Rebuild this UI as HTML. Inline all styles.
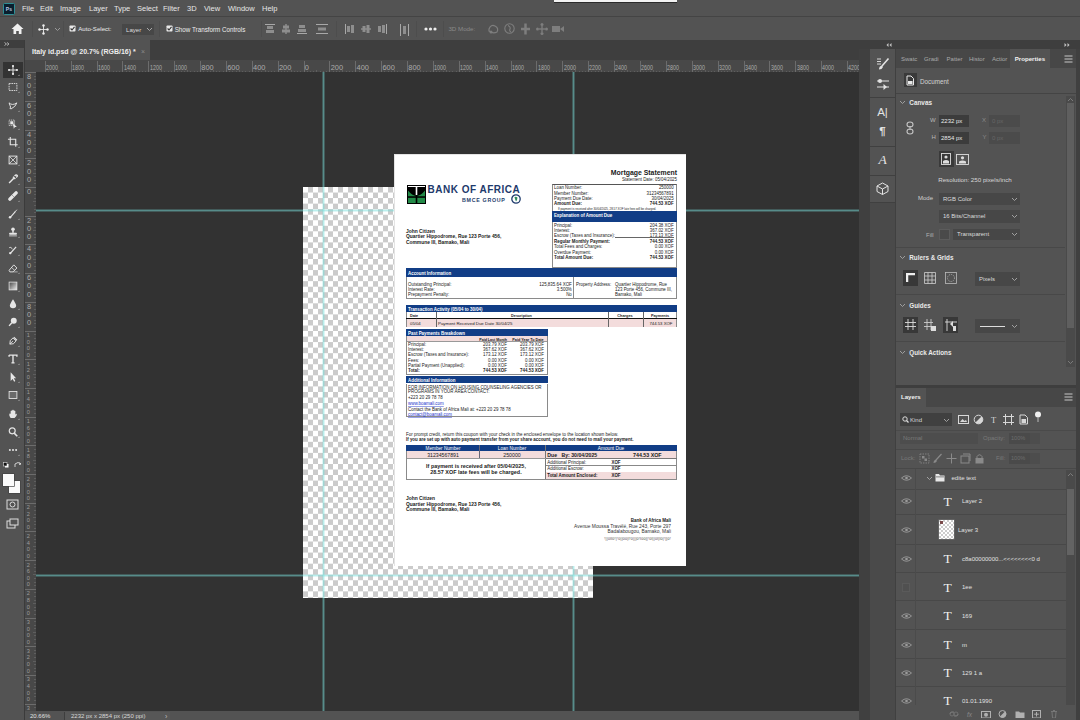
<!DOCTYPE html>
<html><head><meta charset="utf-8">
<style>
*{margin:0;padding:0;box-sizing:border-box}
html,body{width:1080px;height:720px;overflow:hidden;background:#535353;font-family:"Liberation Sans",sans-serif;color:#ddd}
.a{position:absolute}
.t{position:absolute;white-space:pre;line-height:1}
#canvas{left:36px;top:72px;width:823px;height:639px;background:#323232}

</style></head><body>
<div class="a" style="left:0px;top:0px;width:1080px;height:16px;background:#535353;"></div>
<div class="a" style="left:0px;top:16px;width:1080px;height:1px;background:#444444;"></div>
<svg class="a" style="left:2.5px;top:2.5px;" width="12" height="12" viewBox="0 0 12 12"><rect x="0.5" y="0.5" width="11" height="11" rx="1" fill="#0a1f2e" stroke="#2f8f95" stroke-width="1"/><text x="2.8" y="8.2" font-family="Liberation Sans" font-weight="bold" font-size="5" fill="#b9c8e8">Ps</text></svg>
<div class="t" style="top:5px;font-size:7.5px;color:#e6e6e6;left:22px;">File</div>
<div class="t" style="top:5px;font-size:7.5px;color:#e6e6e6;left:40px;">Edit</div>
<div class="t" style="top:5px;font-size:7.5px;color:#e6e6e6;left:60px;">Image</div>
<div class="t" style="top:5px;font-size:7.5px;color:#e6e6e6;left:89px;">Layer</div>
<div class="t" style="top:5px;font-size:7.5px;color:#e6e6e6;left:114px;">Type</div>
<div class="t" style="top:5px;font-size:7.5px;color:#e6e6e6;left:137px;">Select</div>
<div class="t" style="top:5px;font-size:7.5px;color:#e6e6e6;left:163px;">Filter</div>
<div class="t" style="top:5px;font-size:7.5px;color:#e6e6e6;left:187px;">3D</div>
<div class="t" style="top:5px;font-size:7.5px;color:#e6e6e6;left:204px;">View</div>
<div class="t" style="top:5px;font-size:7.5px;color:#e6e6e6;left:228px;">Window</div>
<div class="t" style="top:5px;font-size:7.5px;color:#e6e6e6;left:262px;">Help</div>
<div class="a" style="left:554px;top:0px;width:123px;height:1.6px;background:#f2f2f2;box-shadow:0 1px 0 #2a2a2a;"></div>
<div class="a" style="left:0px;top:17.5px;width:1080px;height:22.5px;background:#535353;"></div>
<svg class="a" style="left:11px;top:23px;" width="13" height="12" viewBox="0 0 13 12"><path d="M6.5 0.5 L12.5 6 L10.5 6 L10.5 11 L7.8 11 L7.8 8 L5.2 8 L5.2 11 L2.5 11 L2.5 6 L0.5 6Z" fill="#f0f0f0"/></svg>
<div class="a" style="left:32px;top:21px;width:1px;height:16px;background:#4d4d4d;"></div>
<svg class="a" style="left:38px;top:24px;" width="11" height="11" viewBox="0 0 11 11"><path d="M5.5 1 L5.5 10 M1 5.5 L10 5.5" stroke="#e8e8e8" stroke-width="0.9"/><circle cx="5.5" cy="1.5" r="1.2" fill="#eee"/><circle cx="5.5" cy="9.5" r="1.2" fill="#eee"/><circle cx="1.5" cy="5.5" r="1.2" fill="#eee"/><circle cx="9.5" cy="5.5" r="1.2" fill="#eee"/></svg>
<svg class="a" style="left:54px;top:27px;" width="7" height="5" viewBox="0 0 7 5"><path d="M1 1 L3.5 3.5 L6 1" stroke="#999" stroke-width="1" fill="none"/></svg>
<div class="a" style="left:63px;top:21px;width:1px;height:16px;background:#4d4d4d;"></div>
<svg class="a" style="left:68.5px;top:25px;" width="7" height="7" viewBox="0 0 7 7"><rect x="0.5" y="0.5" width="6" height="6" rx="0.8" fill="#e8e8e8"/><path d="M1.6 3.5 L3 5 L5.5 1.8" stroke="#333" stroke-width="1.1" fill="none"/></svg>
<div class="t" style="top:26px;font-size:6.1px;color:#ececec;left:78.3px;">Auto-Select:</div>
<div class="a" style="left:122px;top:23.6px;width:32px;height:11.8px;background:#474747;"></div>
<div class="t" style="top:27px;font-size:6.1px;color:#dedede;left:126px;">Layer</div>
<svg class="a" style="left:146px;top:27px;" width="7" height="5" viewBox="0 0 7 5"><path d="M1 1 L3.5 3.5 L6 1" stroke="#aaa" stroke-width="1" fill="none"/></svg>
<div class="a" style="left:158.5px;top:21px;width:1px;height:16px;background:#4d4d4d;"></div>
<svg class="a" style="left:165.5px;top:25px;" width="7" height="7" viewBox="0 0 7 7"><rect x="0.5" y="0.5" width="6" height="6" rx="0.8" fill="#e8e8e8"/><path d="M1.6 3.5 L3 5 L5.5 1.8" stroke="#333" stroke-width="1.1" fill="none"/></svg>
<div class="t" style="top:27px;font-size:6.28px;color:#ececec;left:174.7px;">Show Transform Controls</div>
<div class="a" style="left:260.5px;top:21px;width:1px;height:16px;background:#4d4d4d;"></div>
<svg class="a" style="left:265px;top:24px;" width="12" height="12" viewBox="0 0 12 12"><rect x="0" y="0" width="10" height="1" fill="#a8a8a8"/><rect x="2" y="2" width="6" height="3" fill="#8e8e8e"/><rect x="1" y="6" width="8" height="3" fill="#8e8e8e"/></svg>
<svg class="a" style="left:281px;top:24px;" width="12" height="12" viewBox="0 0 12 12"><rect x="4.5" y="0" width="1" height="10" fill="#a8a8a8"/><rect x="2" y="1.5" width="6" height="3" fill="#8e8e8e"/><rect x="1" y="5.5" width="8" height="3" fill="#8e8e8e"/></svg>
<svg class="a" style="left:296.5px;top:24px;" width="12" height="12" viewBox="0 0 12 12"><rect x="2" y="1" width="6" height="3" fill="#8e8e8e"/><rect x="1" y="5" width="8" height="3" fill="#8e8e8e"/><rect x="0" y="9" width="10" height="1" fill="#a8a8a8"/></svg>
<svg class="a" style="left:316px;top:24px;" width="12" height="12" viewBox="0 0 12 12"><rect x="0" y="0" width="12" height="1" fill="#a8a8a8"/><rect x="2" y="3.5" width="8" height="3" fill="#8e8e8e"/><rect x="0" y="9" width="12" height="1" fill="#a8a8a8"/></svg>
<svg class="a" style="left:345px;top:24px;" width="12" height="12" viewBox="0 0 12 12"><rect x="0" y="0" width="1" height="10" fill="#a8a8a8"/><rect x="2" y="2" width="3" height="6" fill="#8e8e8e"/><rect x="6" y="1" width="3" height="8" fill="#8e8e8e"/></svg>
<svg class="a" style="left:361px;top:24px;" width="12" height="12" viewBox="0 0 12 12"><rect x="0" y="4.5" width="10" height="1" fill="#a8a8a8"/><rect x="1.5" y="2" width="3" height="6" fill="#8e8e8e"/><rect x="5.5" y="1" width="3" height="8" fill="#8e8e8e"/></svg>
<svg class="a" style="left:377px;top:24px;" width="12" height="12" viewBox="0 0 12 12"><rect x="1" y="2" width="3" height="6" fill="#8e8e8e"/><rect x="5" y="1" width="3" height="8" fill="#8e8e8e"/><rect x="9" y="0" width="1" height="10" fill="#a8a8a8"/></svg>
<svg class="a" style="left:400px;top:24px;" width="12" height="12" viewBox="0 0 12 12"><rect x="0" y="0" width="1" height="12" fill="#a8a8a8"/><rect x="3" y="2" width="3" height="8" fill="#8e8e8e"/><rect x="8" y="0" width="1" height="12" fill="#a8a8a8"/></svg>
<div class="a" style="left:336px;top:21px;width:1px;height:16px;background:#4d4d4d;"></div>
<div class="a" style="left:416px;top:21px;width:1px;height:16px;background:#4d4d4d;"></div>
<svg class="a" style="left:424px;top:27px;" width="13" height="4" viewBox="0 0 13 4"><circle cx="2" cy="2" r="1.6" fill="#eee"/><circle cx="6.5" cy="2" r="1.6" fill="#eee"/><circle cx="11" cy="2" r="1.6" fill="#eee"/></svg>
<div class="a" style="left:442.5px;top:21px;width:1px;height:16px;background:#4d4d4d;"></div>
<div class="t" style="top:26px;font-size:6.2px;color:#8a8a8a;left:448.4px;">3D Mode:</div>
<svg class="a" style="left:487px;top:23px;" width="13" height="12" viewBox="0 0 13 12"><path d="M2 6 Q4 1 8 3 Q12 5 10 9 Q6 11 2 8Z" fill="none" stroke="#7e7e7e" stroke-width="1.2"/><circle cx="4" cy="9" r="1.5" fill="#7e7e7e"/></svg>
<svg class="a" style="left:504px;top:23px;" width="11" height="11" viewBox="0 0 11 11"><circle cx="5.5" cy="5.5" r="4.7" fill="none" stroke="#7e7e7e" stroke-width="1.1"/><path d="M4 2.5 Q7 4 6 6 Q5 8 7 9" fill="none" stroke="#7e7e7e" stroke-width="1.1"/></svg>
<svg class="a" style="left:520px;top:23px;" width="11" height="12" viewBox="0 0 11 12"><path d="M5.5 0.5 L5.5 11.5 M1 6 L10 6" stroke="#7e7e7e" stroke-width="2.5"/></svg>
<svg class="a" style="left:536px;top:23px;" width="12" height="12" viewBox="0 0 12 12"><circle cx="6" cy="1.5" r="1.5" fill="#7e7e7e"/><circle cx="6" cy="10.5" r="1.5" fill="#7e7e7e"/><circle cx="1.5" cy="6" r="1.5" fill="#7e7e7e"/><circle cx="10.5" cy="6" r="1.5" fill="#7e7e7e"/><rect x="5.3" y="3" width="1.4" height="6" fill="#7e7e7e"/><rect x="3" y="5.3" width="6" height="1.4" fill="#7e7e7e"/></svg>
<svg class="a" style="left:552px;top:25px;" width="13" height="8" viewBox="0 0 13 8"><rect x="0" y="1" width="8" height="6" fill="#7e7e7e"/><path d="M8 4 L12 1 L12 7Z" fill="#7e7e7e"/></svg>
<div class="a" style="left:0px;top:40px;width:24px;height:8px;background:#3e3e3e;"></div>
<svg class="a" style="left:4px;top:42px;" width="6" height="4" viewBox="0 0 6 4"><path d="M0.5 0.5 L2.5 2 L0.5 3.5 M3 0.5 L5 2 L3 3.5" stroke="#bbb" stroke-width="0.9" fill="none"/></svg>
<div class="a" style="left:0px;top:48px;width:24px;height:663px;background:#535353;"></div>
<div class="a" style="left:24px;top:40px;width:1px;height:680px;background:#3b3b3b;"></div>
<div class="a" style="left:2.6px;top:62px;width:20px;height:16px;background:#333333;"></div>
<svg class="a" style="left:5.5px;top:63.0px;" width="14" height="14" viewBox="0 0 14 14"><g transform="translate(7 7) scale(0.78) translate(-7 -7)"><path d="M7 1 L7 13 M1 7 L13 7" stroke="#e6e6e6" stroke-width="1.2"/><circle cx="7" cy="2" r="1.4" fill="#e6e6e6"/><circle cx="7" cy="12" r="1.4" fill="#e6e6e6"/><circle cx="2" cy="7" r="1.4" fill="#e6e6e6"/><circle cx="12" cy="7" r="1.4" fill="#e6e6e6"/></g><path d="M12 13 L13.5 13 L13.5 11.5Z" fill="#aaa"/></svg>
<svg class="a" style="left:5.5px;top:80.0px;" width="14" height="14" viewBox="0 0 14 14"><g transform="translate(7 7) scale(0.78) translate(-7 -7)"><rect x="2" y="2.5" width="10" height="9" fill="none" stroke="#e6e6e6" stroke-width="1.1" stroke-dasharray="2 1"/></g><path d="M12 13 L13.5 13 L13.5 11.5Z" fill="#aaa"/></svg>
<svg class="a" style="left:5.5px;top:98.5px;" width="14" height="14" viewBox="0 0 14 14"><g transform="translate(7 7) scale(0.78) translate(-7 -7)"><path d="M2 3 Q6 7 12 3 Q9 9 7 9 Q4 12 3 10 Q5 9 3 6Z" fill="none" stroke="#e6e6e6" stroke-width="1.2"/></g><path d="M12 13 L13.5 13 L13.5 11.5Z" fill="#aaa"/></svg>
<svg class="a" style="left:5.5px;top:117.0px;" width="14" height="14" viewBox="0 0 14 14"><g transform="translate(7 7) scale(0.78) translate(-7 -7)"><rect x="2" y="2" width="7" height="7" fill="none" stroke="#e6e6e6" stroke-width="1" stroke-dasharray="1.5 1"/><rect x="3.5" y="3.5" width="4" height="4" fill="#e6e6e6"/><path d="M7 6 L12 11 L9.5 11 L8 13Z" fill="#e6e6e6"/></g><path d="M12 13 L13.5 13 L13.5 11.5Z" fill="#aaa"/></svg>
<svg class="a" style="left:5.5px;top:134.5px;" width="14" height="14" viewBox="0 0 14 14"><g transform="translate(7 7) scale(0.78) translate(-7 -7)"><path d="M3.5 0.5 L3.5 10.5 L13 10.5 M0.5 3.5 L10.5 3.5 L10.5 13" stroke="#e6e6e6" stroke-width="1.4" fill="none"/></g><path d="M12 13 L13.5 13 L13.5 11.5Z" fill="#aaa"/></svg>
<svg class="a" style="left:5.5px;top:152.5px;" width="14" height="14" viewBox="0 0 14 14"><g transform="translate(7 7) scale(0.78) translate(-7 -7)"><rect x="2" y="2" width="10" height="10" fill="none" stroke="#e6e6e6" stroke-width="1.2"/><path d="M2 2 L12 12 M12 2 L2 12" stroke="#e6e6e6" stroke-width="1"/></g><path d="M12 13 L13.5 13 L13.5 11.5Z" fill="#aaa"/></svg>
<svg class="a" style="left:5.5px;top:171.5px;" width="14" height="14" viewBox="0 0 14 14"><g transform="translate(7 7) scale(0.78) translate(-7 -7)"><path d="M2 12 L8 6 M7 4 L10 7 M9 3 Q11 1 12.5 2.5 Q13 4 11 5" stroke="#e6e6e6" stroke-width="1.8" fill="none"/></g><path d="M12 13 L13.5 13 L13.5 11.5Z" fill="#aaa"/></svg>
<svg class="a" style="left:5.5px;top:189.0px;" width="14" height="14" viewBox="0 0 14 14"><g transform="translate(7 7) scale(0.78) translate(-7 -7)"><path d="M3 11 L11 3" stroke="#e6e6e6" stroke-width="4.5" stroke-linecap="round"/><path d="M6 6 L8 8" stroke="#888" stroke-width="1.2"/></g><path d="M12 13 L13.5 13 L13.5 11.5Z" fill="#aaa"/></svg>
<svg class="a" style="left:5.5px;top:206.5px;" width="14" height="14" viewBox="0 0 14 14"><g transform="translate(7 7) scale(0.78) translate(-7 -7)"><path d="M3 12 L10 4" stroke="#e6e6e6" stroke-width="1.5"/><path d="M9 5 L12 1.5" stroke="#e6e6e6" stroke-width="1.1"/><circle cx="3.2" cy="11.2" r="1.6" fill="#e6e6e6"/></g><path d="M12 13 L13.5 13 L13.5 11.5Z" fill="#aaa"/></svg>
<svg class="a" style="left:5.5px;top:224.5px;" width="14" height="14" viewBox="0 0 14 14"><g transform="translate(7 7) scale(0.78) translate(-7 -7)"><circle cx="7" cy="3.5" r="2.3" fill="#e6e6e6"/><rect x="6" y="5" width="2" height="3" fill="#e6e6e6"/><rect x="2" y="8" width="10" height="2.5" rx="1" fill="#e6e6e6"/><rect x="2" y="11.5" width="10" height="1" fill="#e6e6e6"/></g><path d="M12 13 L13.5 13 L13.5 11.5Z" fill="#aaa"/></svg>
<svg class="a" style="left:5.5px;top:243.0px;" width="14" height="14" viewBox="0 0 14 14"><g transform="translate(7 7) scale(0.78) translate(-7 -7)"><path d="M3 12 L11 3" stroke="#e6e6e6" stroke-width="1.6"/><path d="M2 4 Q5 2 6 6" stroke="#e6e6e6" stroke-width="1" fill="none"/><circle cx="3.5" cy="11" r="1.5" fill="#e6e6e6"/></g><path d="M12 13 L13.5 13 L13.5 11.5Z" fill="#aaa"/></svg>
<svg class="a" style="left:5.5px;top:261.0px;" width="14" height="14" viewBox="0 0 14 14"><g transform="translate(7 7) scale(0.78) translate(-7 -7)"><path d="M2 10 L8 3 L12 7 L7 12 L3 12Z" fill="none" stroke="#e6e6e6" stroke-width="1.2"/><path d="M5 6 L9 10" stroke="#e6e6e6" stroke-width="1"/><path d="M7 12 L13 12" stroke="#e6e6e6" stroke-width="0.8"/></g><path d="M12 13 L13.5 13 L13.5 11.5Z" fill="#aaa"/></svg>
<svg class="a" style="left:5.5px;top:279.0px;" width="14" height="14" viewBox="0 0 14 14"><g transform="translate(7 7) scale(0.78) translate(-7 -7)"><defs><linearGradient id="gr" x1="0" x2="1" y1="0" y2="1"><stop offset="0" stop-color="#444"/><stop offset="1" stop-color="#eee"/></linearGradient></defs><rect x="2" y="2" width="10" height="10" fill="url(#gr)" stroke="#e6e6e6" stroke-width="1"/></g><path d="M12 13 L13.5 13 L13.5 11.5Z" fill="#aaa"/></svg>
<svg class="a" style="left:5.5px;top:297.0px;" width="14" height="14" viewBox="0 0 14 14"><g transform="translate(7 7) scale(0.78) translate(-7 -7)"><path d="M7 1 Q11 7 11 9 Q11 12.5 7 12.5 Q3 12.5 3 9 Q3 7 7 1Z" fill="#e6e6e6"/></g><path d="M12 13 L13.5 13 L13.5 11.5Z" fill="#aaa"/></svg>
<svg class="a" style="left:5.5px;top:315.0px;" width="14" height="14" viewBox="0 0 14 14"><g transform="translate(7 7) scale(0.78) translate(-7 -7)"><circle cx="8" cy="5.5" r="3.8" fill="#e6e6e6"/><path d="M5.5 8 L2 12" stroke="#e6e6e6" stroke-width="1.8"/></g><path d="M12 13 L13.5 13 L13.5 11.5Z" fill="#aaa"/></svg>
<svg class="a" style="left:5.5px;top:334.0px;" width="14" height="14" viewBox="0 0 14 14"><g transform="translate(7 7) scale(0.78) translate(-7 -7)"><path d="M3 11 Q2 6 7 3 L11 7 Q8 12 3 11Z" fill="none" stroke="#e6e6e6" stroke-width="1.2"/><path d="M3 11 L7 7" stroke="#e6e6e6" stroke-width="1"/><path d="M8 2 L12 6" stroke="#e6e6e6" stroke-width="1.5"/></g><path d="M12 13 L13.5 13 L13.5 11.5Z" fill="#aaa"/></svg>
<svg class="a" style="left:5.5px;top:352.0px;" width="14" height="14" viewBox="0 0 14 14"><g transform="translate(7 7) scale(0.78) translate(-7 -7)"><path d="M2 2 L12 2 L12 4 M2 2 L2 4 M7 2 L7 12 M5 12 L9 12" stroke="#e6e6e6" stroke-width="1.8" fill="none"/></g><path d="M12 13 L13.5 13 L13.5 11.5Z" fill="#aaa"/></svg>
<svg class="a" style="left:5.5px;top:370.0px;" width="14" height="14" viewBox="0 0 14 14"><g transform="translate(7 7) scale(0.78) translate(-7 -7)"><path d="M4 1 L4 12 L6.5 9.5 L8.5 13 L10 12 L8 8.5 L11 8.5Z" fill="#e6e6e6"/></g><path d="M12 13 L13.5 13 L13.5 11.5Z" fill="#aaa"/></svg>
<svg class="a" style="left:5.5px;top:388.0px;" width="14" height="14" viewBox="0 0 14 14"><g transform="translate(7 7) scale(0.78) translate(-7 -7)"><rect x="2" y="2.5" width="10" height="9" fill="#6a6a6a" stroke="#e6e6e6" stroke-width="1.1"/></g><path d="M12 13 L13.5 13 L13.5 11.5Z" fill="#aaa"/></svg>
<svg class="a" style="left:5.5px;top:406.5px;" width="14" height="14" viewBox="0 0 14 14"><g transform="translate(7 7) scale(0.78) translate(-7 -7)"><path d="M4 12 Q1 8 3 6 L4 7 L4 3 Q5 2 6 3 L6 2 Q7 1 8 2 L8 3 Q9 2 10 3 L10 8 Q11 6 12 7 Q12 10 9 12Z" fill="#e6e6e6"/></g><path d="M12 13 L13.5 13 L13.5 11.5Z" fill="#aaa"/></svg>
<svg class="a" style="left:5.5px;top:425.0px;" width="14" height="14" viewBox="0 0 14 14"><g transform="translate(7 7) scale(0.78) translate(-7 -7)"><circle cx="6" cy="5.5" r="3.8" fill="none" stroke="#e6e6e6" stroke-width="1.5"/><path d="M8.5 8.5 L12.5 12.5" stroke="#e6e6e6" stroke-width="2"/></g><path d="M12 13 L13.5 13 L13.5 11.5Z" fill="#aaa"/></svg>
<svg class="a" style="left:5.5px;top:442.5px;" width="14" height="14" viewBox="0 0 14 14"><g transform="translate(7 7) scale(0.78) translate(-7 -7)"><circle cx="3" cy="7" r="1.3" fill="#e6e6e6"/><circle cx="7" cy="7" r="1.3" fill="#e6e6e6"/><circle cx="11" cy="7" r="1.3" fill="#e6e6e6"/></g><path d="M12 13 L13.5 13 L13.5 11.5Z" fill="#aaa"/></svg>
<svg class="a" style="left:3px;top:462px;" width="6" height="6" viewBox="0 0 6 6"><rect x="2" y="2" width="3.5" height="3.5" fill="#fff"/><rect x="0.5" y="0.5" width="3.5" height="3.5" fill="#111" stroke="#ddd" stroke-width="0.6"/></svg>
<svg class="a" style="left:14px;top:461px;" width="8" height="7" viewBox="0 0 8 7"><path d="M1 3 Q4 0 7 3 M5.5 1.5 L7 3 L5 3.5" stroke="#ddd" stroke-width="0.9" fill="none"/><path d="M1 3 L1 6" stroke="#ddd" stroke-width="0.9"/></svg>
<div class="a" style="left:9px;top:481px;width:11px;height:12px;background:#fafafa;box-shadow:0 0 0 0.7px #444;"></div>
<div class="a" style="left:3px;top:474px;width:11px;height:12px;background:#fafafa;box-shadow:0 0 0 0.7px #444;"></div>
<svg class="a" style="left:6px;top:499px;" width="13" height="11" viewBox="0 0 13 11"><rect x="1" y="1" width="11" height="9" fill="none" stroke="#ddd" stroke-width="1"/><circle cx="6.5" cy="5.5" r="2.5" fill="none" stroke="#ddd" stroke-width="1"/></svg>
<svg class="a" style="left:6px;top:518px;" width="13" height="11" viewBox="0 0 13 11"><rect x="1" y="3" width="8" height="7" fill="none" stroke="#ddd" stroke-width="1"/><rect x="4" y="1" width="8" height="6" fill="#535353" stroke="#ddd" stroke-width="1"/></svg>
<div class="a" style="left:25px;top:40px;width:834px;height:20px;background:#3e3e3e;"></div>
<div class="a" style="left:25px;top:40px;width:125px;height:20px;background:#535353;"></div>
<div class="t" style="top:48px;font-size:7.0px;font-weight:bold;color:#eeeeee;left:32px;">Italy id.psd @ 20.7% (RGB/16) *</div>
<div class="t" style="top:48px;font-size:7px;color:#8a8a8a;left:141px;">×</div>
<div class="a" style="left:25px;top:60px;width:834px;height:12.5px;background:#484848;"></div>
<div class="a" style="left:25px;top:72.5px;width:11px;height:638.5px;background:#484848;"></div>
<div class="a" style="left:25px;top:72px;width:834px;height:0.6px;background:#3a3a3a;"></div>
<div class="a" style="left:35.5px;top:72px;width:0.6px;height:639px;background:#3a3a3a;"></div>
<div class="a" style="left:44.7px;top:61px;width:0.8px;height:11.5px;background:#6c6c6c;"></div>
<div class="a" style="left:47.9px;top:70.9px;width:0.6px;height:1.6px;background:#5e5e5e;"></div>
<div class="a" style="left:51.2px;top:70.9px;width:0.6px;height:1.6px;background:#5e5e5e;"></div>
<div class="a" style="left:54.4px;top:70.9px;width:0.6px;height:1.6px;background:#5e5e5e;"></div>
<div class="a" style="left:57.6px;top:69.5px;width:0.6px;height:3px;background:#5e5e5e;"></div>
<div class="a" style="left:60.9px;top:70.9px;width:0.6px;height:1.6px;background:#5e5e5e;"></div>
<div class="a" style="left:64.1px;top:70.9px;width:0.6px;height:1.6px;background:#5e5e5e;"></div>
<div class="a" style="left:67.3px;top:70.9px;width:0.6px;height:1.6px;background:#5e5e5e;"></div>
<div class="t" style="top:64px;font-size:7.4px;color:#ababab;left:45.999999999999986px;transform:scaleX(0.72);transform-origin:0 0;">2000</div>
<div class="a" style="left:70.6px;top:61px;width:0.8px;height:11.5px;background:#6c6c6c;"></div>
<div class="a" style="left:73.8px;top:70.9px;width:0.6px;height:1.6px;background:#5e5e5e;"></div>
<div class="a" style="left:77.1px;top:70.9px;width:0.6px;height:1.6px;background:#5e5e5e;"></div>
<div class="a" style="left:80.3px;top:70.9px;width:0.6px;height:1.6px;background:#5e5e5e;"></div>
<div class="a" style="left:83.5px;top:69.5px;width:0.6px;height:3px;background:#5e5e5e;"></div>
<div class="a" style="left:86.8px;top:70.9px;width:0.6px;height:1.6px;background:#5e5e5e;"></div>
<div class="a" style="left:90.0px;top:70.9px;width:0.6px;height:1.6px;background:#5e5e5e;"></div>
<div class="a" style="left:93.2px;top:70.9px;width:0.6px;height:1.6px;background:#5e5e5e;"></div>
<div class="t" style="top:64px;font-size:7.4px;color:#ababab;left:71.88000000000001px;transform:scaleX(0.72);transform-origin:0 0;">1800</div>
<div class="a" style="left:96.5px;top:61px;width:0.8px;height:11.5px;background:#6c6c6c;"></div>
<div class="a" style="left:99.7px;top:70.9px;width:0.6px;height:1.6px;background:#5e5e5e;"></div>
<div class="a" style="left:102.9px;top:70.9px;width:0.6px;height:1.6px;background:#5e5e5e;"></div>
<div class="a" style="left:106.2px;top:70.9px;width:0.6px;height:1.6px;background:#5e5e5e;"></div>
<div class="a" style="left:109.4px;top:69.5px;width:0.6px;height:3px;background:#5e5e5e;"></div>
<div class="a" style="left:112.6px;top:70.9px;width:0.6px;height:1.6px;background:#5e5e5e;"></div>
<div class="a" style="left:115.9px;top:70.9px;width:0.6px;height:1.6px;background:#5e5e5e;"></div>
<div class="a" style="left:119.1px;top:70.9px;width:0.6px;height:1.6px;background:#5e5e5e;"></div>
<div class="t" style="top:64px;font-size:7.4px;color:#ababab;left:97.76px;transform:scaleX(0.72);transform-origin:0 0;">1600</div>
<div class="a" style="left:122.3px;top:61px;width:0.8px;height:11.5px;background:#6c6c6c;"></div>
<div class="a" style="left:125.6px;top:70.9px;width:0.6px;height:1.6px;background:#5e5e5e;"></div>
<div class="a" style="left:128.8px;top:70.9px;width:0.6px;height:1.6px;background:#5e5e5e;"></div>
<div class="a" style="left:132.0px;top:70.9px;width:0.6px;height:1.6px;background:#5e5e5e;"></div>
<div class="a" style="left:135.3px;top:69.5px;width:0.6px;height:3px;background:#5e5e5e;"></div>
<div class="a" style="left:138.5px;top:70.9px;width:0.6px;height:1.6px;background:#5e5e5e;"></div>
<div class="a" style="left:141.8px;top:70.9px;width:0.6px;height:1.6px;background:#5e5e5e;"></div>
<div class="a" style="left:145.0px;top:70.9px;width:0.6px;height:1.6px;background:#5e5e5e;"></div>
<div class="t" style="top:64px;font-size:7.4px;color:#ababab;left:123.64px;transform:scaleX(0.72);transform-origin:0 0;">1400</div>
<div class="a" style="left:148.2px;top:61px;width:0.8px;height:11.5px;background:#6c6c6c;"></div>
<div class="a" style="left:151.5px;top:70.9px;width:0.6px;height:1.6px;background:#5e5e5e;"></div>
<div class="a" style="left:154.7px;top:70.9px;width:0.6px;height:1.6px;background:#5e5e5e;"></div>
<div class="a" style="left:157.9px;top:70.9px;width:0.6px;height:1.6px;background:#5e5e5e;"></div>
<div class="a" style="left:161.2px;top:69.5px;width:0.6px;height:3px;background:#5e5e5e;"></div>
<div class="a" style="left:164.4px;top:70.9px;width:0.6px;height:1.6px;background:#5e5e5e;"></div>
<div class="a" style="left:167.6px;top:70.9px;width:0.6px;height:1.6px;background:#5e5e5e;"></div>
<div class="a" style="left:170.9px;top:70.9px;width:0.6px;height:1.6px;background:#5e5e5e;"></div>
<div class="t" style="top:64px;font-size:7.4px;color:#ababab;left:149.52px;transform:scaleX(0.72);transform-origin:0 0;">1200</div>
<div class="a" style="left:174.1px;top:61px;width:0.8px;height:11.5px;background:#6c6c6c;"></div>
<div class="a" style="left:177.3px;top:70.9px;width:0.6px;height:1.6px;background:#5e5e5e;"></div>
<div class="a" style="left:180.6px;top:70.9px;width:0.6px;height:1.6px;background:#5e5e5e;"></div>
<div class="a" style="left:183.8px;top:70.9px;width:0.6px;height:1.6px;background:#5e5e5e;"></div>
<div class="a" style="left:187.0px;top:69.5px;width:0.6px;height:3px;background:#5e5e5e;"></div>
<div class="a" style="left:190.3px;top:70.9px;width:0.6px;height:1.6px;background:#5e5e5e;"></div>
<div class="a" style="left:193.5px;top:70.9px;width:0.6px;height:1.6px;background:#5e5e5e;"></div>
<div class="a" style="left:196.7px;top:70.9px;width:0.6px;height:1.6px;background:#5e5e5e;"></div>
<div class="t" style="top:64px;font-size:7.4px;color:#ababab;left:175.4px;transform:scaleX(0.72);transform-origin:0 0;">1000</div>
<div class="a" style="left:200.0px;top:61px;width:0.8px;height:11.5px;background:#6c6c6c;"></div>
<div class="a" style="left:203.2px;top:70.9px;width:0.6px;height:1.6px;background:#5e5e5e;"></div>
<div class="a" style="left:206.5px;top:70.9px;width:0.6px;height:1.6px;background:#5e5e5e;"></div>
<div class="a" style="left:209.7px;top:70.9px;width:0.6px;height:1.6px;background:#5e5e5e;"></div>
<div class="a" style="left:212.9px;top:69.5px;width:0.6px;height:3px;background:#5e5e5e;"></div>
<div class="a" style="left:216.2px;top:70.9px;width:0.6px;height:1.6px;background:#5e5e5e;"></div>
<div class="a" style="left:219.4px;top:70.9px;width:0.6px;height:1.6px;background:#5e5e5e;"></div>
<div class="a" style="left:222.6px;top:70.9px;width:0.6px;height:1.6px;background:#5e5e5e;"></div>
<div class="t" style="top:64px;font-size:7.4px;color:#ababab;left:201.28000000000003px;">800</div>
<div class="a" style="left:225.9px;top:61px;width:0.8px;height:11.5px;background:#6c6c6c;"></div>
<div class="a" style="left:229.1px;top:70.9px;width:0.6px;height:1.6px;background:#5e5e5e;"></div>
<div class="a" style="left:232.3px;top:70.9px;width:0.6px;height:1.6px;background:#5e5e5e;"></div>
<div class="a" style="left:235.6px;top:70.9px;width:0.6px;height:1.6px;background:#5e5e5e;"></div>
<div class="a" style="left:238.8px;top:69.5px;width:0.6px;height:3px;background:#5e5e5e;"></div>
<div class="a" style="left:242.0px;top:70.9px;width:0.6px;height:1.6px;background:#5e5e5e;"></div>
<div class="a" style="left:245.3px;top:70.9px;width:0.6px;height:1.6px;background:#5e5e5e;"></div>
<div class="a" style="left:248.5px;top:70.9px;width:0.6px;height:1.6px;background:#5e5e5e;"></div>
<div class="t" style="top:64px;font-size:7.4px;color:#ababab;left:227.16000000000003px;">600</div>
<div class="a" style="left:251.7px;top:61px;width:0.8px;height:11.5px;background:#6c6c6c;"></div>
<div class="a" style="left:255.0px;top:70.9px;width:0.6px;height:1.6px;background:#5e5e5e;"></div>
<div class="a" style="left:258.2px;top:70.9px;width:0.6px;height:1.6px;background:#5e5e5e;"></div>
<div class="a" style="left:261.4px;top:70.9px;width:0.6px;height:1.6px;background:#5e5e5e;"></div>
<div class="a" style="left:264.7px;top:69.5px;width:0.6px;height:3px;background:#5e5e5e;"></div>
<div class="a" style="left:267.9px;top:70.9px;width:0.6px;height:1.6px;background:#5e5e5e;"></div>
<div class="a" style="left:271.2px;top:70.9px;width:0.6px;height:1.6px;background:#5e5e5e;"></div>
<div class="a" style="left:274.4px;top:70.9px;width:0.6px;height:1.6px;background:#5e5e5e;"></div>
<div class="t" style="top:64px;font-size:7.4px;color:#ababab;left:253.04000000000002px;">400</div>
<div class="a" style="left:277.6px;top:61px;width:0.8px;height:11.5px;background:#6c6c6c;"></div>
<div class="a" style="left:280.9px;top:70.9px;width:0.6px;height:1.6px;background:#5e5e5e;"></div>
<div class="a" style="left:284.1px;top:70.9px;width:0.6px;height:1.6px;background:#5e5e5e;"></div>
<div class="a" style="left:287.3px;top:70.9px;width:0.6px;height:1.6px;background:#5e5e5e;"></div>
<div class="a" style="left:290.6px;top:69.5px;width:0.6px;height:3px;background:#5e5e5e;"></div>
<div class="a" style="left:293.8px;top:70.9px;width:0.6px;height:1.6px;background:#5e5e5e;"></div>
<div class="a" style="left:297.0px;top:70.9px;width:0.6px;height:1.6px;background:#5e5e5e;"></div>
<div class="a" style="left:300.3px;top:70.9px;width:0.6px;height:1.6px;background:#5e5e5e;"></div>
<div class="t" style="top:64px;font-size:7.4px;color:#ababab;left:278.92px;">200</div>
<div class="a" style="left:303.5px;top:61px;width:0.8px;height:11.5px;background:#6c6c6c;"></div>
<div class="a" style="left:306.7px;top:70.9px;width:0.6px;height:1.6px;background:#5e5e5e;"></div>
<div class="a" style="left:310.0px;top:70.9px;width:0.6px;height:1.6px;background:#5e5e5e;"></div>
<div class="a" style="left:313.2px;top:70.9px;width:0.6px;height:1.6px;background:#5e5e5e;"></div>
<div class="a" style="left:316.4px;top:69.5px;width:0.6px;height:3px;background:#5e5e5e;"></div>
<div class="a" style="left:319.7px;top:70.9px;width:0.6px;height:1.6px;background:#5e5e5e;"></div>
<div class="a" style="left:322.9px;top:70.9px;width:0.6px;height:1.6px;background:#5e5e5e;"></div>
<div class="a" style="left:326.1px;top:70.9px;width:0.6px;height:1.6px;background:#5e5e5e;"></div>
<div class="t" style="top:64px;font-size:7.4px;color:#ababab;left:304.8px;">0</div>
<div class="a" style="left:329.4px;top:61px;width:0.8px;height:11.5px;background:#6c6c6c;"></div>
<div class="a" style="left:332.6px;top:70.9px;width:0.6px;height:1.6px;background:#5e5e5e;"></div>
<div class="a" style="left:335.9px;top:70.9px;width:0.6px;height:1.6px;background:#5e5e5e;"></div>
<div class="a" style="left:339.1px;top:70.9px;width:0.6px;height:1.6px;background:#5e5e5e;"></div>
<div class="a" style="left:342.3px;top:69.5px;width:0.6px;height:3px;background:#5e5e5e;"></div>
<div class="a" style="left:345.6px;top:70.9px;width:0.6px;height:1.6px;background:#5e5e5e;"></div>
<div class="a" style="left:348.8px;top:70.9px;width:0.6px;height:1.6px;background:#5e5e5e;"></div>
<div class="a" style="left:352.0px;top:70.9px;width:0.6px;height:1.6px;background:#5e5e5e;"></div>
<div class="t" style="top:64px;font-size:7.4px;color:#ababab;left:330.68px;">200</div>
<div class="a" style="left:355.3px;top:61px;width:0.8px;height:11.5px;background:#6c6c6c;"></div>
<div class="a" style="left:358.5px;top:70.9px;width:0.6px;height:1.6px;background:#5e5e5e;"></div>
<div class="a" style="left:361.7px;top:70.9px;width:0.6px;height:1.6px;background:#5e5e5e;"></div>
<div class="a" style="left:365.0px;top:70.9px;width:0.6px;height:1.6px;background:#5e5e5e;"></div>
<div class="a" style="left:368.2px;top:69.5px;width:0.6px;height:3px;background:#5e5e5e;"></div>
<div class="a" style="left:371.4px;top:70.9px;width:0.6px;height:1.6px;background:#5e5e5e;"></div>
<div class="a" style="left:374.7px;top:70.9px;width:0.6px;height:1.6px;background:#5e5e5e;"></div>
<div class="a" style="left:377.9px;top:70.9px;width:0.6px;height:1.6px;background:#5e5e5e;"></div>
<div class="t" style="top:64px;font-size:7.4px;color:#ababab;left:356.56px;">400</div>
<div class="a" style="left:381.1px;top:61px;width:0.8px;height:11.5px;background:#6c6c6c;"></div>
<div class="a" style="left:384.4px;top:70.9px;width:0.6px;height:1.6px;background:#5e5e5e;"></div>
<div class="a" style="left:387.6px;top:70.9px;width:0.6px;height:1.6px;background:#5e5e5e;"></div>
<div class="a" style="left:390.8px;top:70.9px;width:0.6px;height:1.6px;background:#5e5e5e;"></div>
<div class="a" style="left:394.1px;top:69.5px;width:0.6px;height:3px;background:#5e5e5e;"></div>
<div class="a" style="left:397.3px;top:70.9px;width:0.6px;height:1.6px;background:#5e5e5e;"></div>
<div class="a" style="left:400.6px;top:70.9px;width:0.6px;height:1.6px;background:#5e5e5e;"></div>
<div class="a" style="left:403.8px;top:70.9px;width:0.6px;height:1.6px;background:#5e5e5e;"></div>
<div class="t" style="top:64px;font-size:7.4px;color:#ababab;left:382.44px;">600</div>
<div class="a" style="left:407.0px;top:61px;width:0.8px;height:11.5px;background:#6c6c6c;"></div>
<div class="a" style="left:410.3px;top:70.9px;width:0.6px;height:1.6px;background:#5e5e5e;"></div>
<div class="a" style="left:413.5px;top:70.9px;width:0.6px;height:1.6px;background:#5e5e5e;"></div>
<div class="a" style="left:416.7px;top:70.9px;width:0.6px;height:1.6px;background:#5e5e5e;"></div>
<div class="a" style="left:420.0px;top:69.5px;width:0.6px;height:3px;background:#5e5e5e;"></div>
<div class="a" style="left:423.2px;top:70.9px;width:0.6px;height:1.6px;background:#5e5e5e;"></div>
<div class="a" style="left:426.4px;top:70.9px;width:0.6px;height:1.6px;background:#5e5e5e;"></div>
<div class="a" style="left:429.7px;top:70.9px;width:0.6px;height:1.6px;background:#5e5e5e;"></div>
<div class="t" style="top:64px;font-size:7.4px;color:#ababab;left:408.32px;">800</div>
<div class="a" style="left:432.9px;top:61px;width:0.8px;height:11.5px;background:#6c6c6c;"></div>
<div class="a" style="left:436.1px;top:70.9px;width:0.6px;height:1.6px;background:#5e5e5e;"></div>
<div class="a" style="left:439.4px;top:70.9px;width:0.6px;height:1.6px;background:#5e5e5e;"></div>
<div class="a" style="left:442.6px;top:70.9px;width:0.6px;height:1.6px;background:#5e5e5e;"></div>
<div class="a" style="left:445.8px;top:69.5px;width:0.6px;height:3px;background:#5e5e5e;"></div>
<div class="a" style="left:449.1px;top:70.9px;width:0.6px;height:1.6px;background:#5e5e5e;"></div>
<div class="a" style="left:452.3px;top:70.9px;width:0.6px;height:1.6px;background:#5e5e5e;"></div>
<div class="a" style="left:455.5px;top:70.9px;width:0.6px;height:1.6px;background:#5e5e5e;"></div>
<div class="t" style="top:64px;font-size:7.4px;color:#ababab;left:434.2px;transform:scaleX(0.72);transform-origin:0 0;">1000</div>
<div class="a" style="left:458.8px;top:61px;width:0.8px;height:11.5px;background:#6c6c6c;"></div>
<div class="a" style="left:462.0px;top:70.9px;width:0.6px;height:1.6px;background:#5e5e5e;"></div>
<div class="a" style="left:465.2px;top:70.9px;width:0.6px;height:1.6px;background:#5e5e5e;"></div>
<div class="a" style="left:468.5px;top:70.9px;width:0.6px;height:1.6px;background:#5e5e5e;"></div>
<div class="a" style="left:471.7px;top:69.5px;width:0.6px;height:3px;background:#5e5e5e;"></div>
<div class="a" style="left:475.0px;top:70.9px;width:0.6px;height:1.6px;background:#5e5e5e;"></div>
<div class="a" style="left:478.2px;top:70.9px;width:0.6px;height:1.6px;background:#5e5e5e;"></div>
<div class="a" style="left:481.4px;top:70.9px;width:0.6px;height:1.6px;background:#5e5e5e;"></div>
<div class="t" style="top:64px;font-size:7.4px;color:#ababab;left:460.08px;transform:scaleX(0.72);transform-origin:0 0;">1200</div>
<div class="a" style="left:484.7px;top:61px;width:0.8px;height:11.5px;background:#6c6c6c;"></div>
<div class="a" style="left:487.9px;top:70.9px;width:0.6px;height:1.6px;background:#5e5e5e;"></div>
<div class="a" style="left:491.1px;top:70.9px;width:0.6px;height:1.6px;background:#5e5e5e;"></div>
<div class="a" style="left:494.4px;top:70.9px;width:0.6px;height:1.6px;background:#5e5e5e;"></div>
<div class="a" style="left:497.6px;top:69.5px;width:0.6px;height:3px;background:#5e5e5e;"></div>
<div class="a" style="left:500.8px;top:70.9px;width:0.6px;height:1.6px;background:#5e5e5e;"></div>
<div class="a" style="left:504.1px;top:70.9px;width:0.6px;height:1.6px;background:#5e5e5e;"></div>
<div class="a" style="left:507.3px;top:70.9px;width:0.6px;height:1.6px;background:#5e5e5e;"></div>
<div class="t" style="top:64px;font-size:7.4px;color:#ababab;left:485.96px;transform:scaleX(0.72);transform-origin:0 0;">1400</div>
<div class="a" style="left:510.5px;top:61px;width:0.8px;height:11.5px;background:#6c6c6c;"></div>
<div class="a" style="left:513.8px;top:70.9px;width:0.6px;height:1.6px;background:#5e5e5e;"></div>
<div class="a" style="left:517.0px;top:70.9px;width:0.6px;height:1.6px;background:#5e5e5e;"></div>
<div class="a" style="left:520.2px;top:70.9px;width:0.6px;height:1.6px;background:#5e5e5e;"></div>
<div class="a" style="left:523.5px;top:69.5px;width:0.6px;height:3px;background:#5e5e5e;"></div>
<div class="a" style="left:526.7px;top:70.9px;width:0.6px;height:1.6px;background:#5e5e5e;"></div>
<div class="a" style="left:529.9px;top:70.9px;width:0.6px;height:1.6px;background:#5e5e5e;"></div>
<div class="a" style="left:533.2px;top:70.9px;width:0.6px;height:1.6px;background:#5e5e5e;"></div>
<div class="t" style="top:64px;font-size:7.4px;color:#ababab;left:511.84px;transform:scaleX(0.72);transform-origin:0 0;">1600</div>
<div class="a" style="left:536.4px;top:61px;width:0.8px;height:11.5px;background:#6c6c6c;"></div>
<div class="a" style="left:539.7px;top:70.9px;width:0.6px;height:1.6px;background:#5e5e5e;"></div>
<div class="a" style="left:542.9px;top:70.9px;width:0.6px;height:1.6px;background:#5e5e5e;"></div>
<div class="a" style="left:546.1px;top:70.9px;width:0.6px;height:1.6px;background:#5e5e5e;"></div>
<div class="a" style="left:549.4px;top:69.5px;width:0.6px;height:3px;background:#5e5e5e;"></div>
<div class="a" style="left:552.6px;top:70.9px;width:0.6px;height:1.6px;background:#5e5e5e;"></div>
<div class="a" style="left:555.8px;top:70.9px;width:0.6px;height:1.6px;background:#5e5e5e;"></div>
<div class="a" style="left:559.1px;top:70.9px;width:0.6px;height:1.6px;background:#5e5e5e;"></div>
<div class="t" style="top:64px;font-size:7.4px;color:#ababab;left:537.7199999999999px;transform:scaleX(0.72);transform-origin:0 0;">1800</div>
<div class="a" style="left:562.3px;top:61px;width:0.8px;height:11.5px;background:#6c6c6c;"></div>
<div class="a" style="left:565.5px;top:70.9px;width:0.6px;height:1.6px;background:#5e5e5e;"></div>
<div class="a" style="left:568.8px;top:70.9px;width:0.6px;height:1.6px;background:#5e5e5e;"></div>
<div class="a" style="left:572.0px;top:70.9px;width:0.6px;height:1.6px;background:#5e5e5e;"></div>
<div class="a" style="left:575.2px;top:69.5px;width:0.6px;height:3px;background:#5e5e5e;"></div>
<div class="a" style="left:578.5px;top:70.9px;width:0.6px;height:1.6px;background:#5e5e5e;"></div>
<div class="a" style="left:581.7px;top:70.9px;width:0.6px;height:1.6px;background:#5e5e5e;"></div>
<div class="a" style="left:584.9px;top:70.9px;width:0.6px;height:1.6px;background:#5e5e5e;"></div>
<div class="t" style="top:64px;font-size:7.4px;color:#ababab;left:563.5999999999999px;transform:scaleX(0.72);transform-origin:0 0;">2000</div>
<div class="a" style="left:588.2px;top:61px;width:0.8px;height:11.5px;background:#6c6c6c;"></div>
<div class="a" style="left:591.4px;top:70.9px;width:0.6px;height:1.6px;background:#5e5e5e;"></div>
<div class="a" style="left:594.7px;top:70.9px;width:0.6px;height:1.6px;background:#5e5e5e;"></div>
<div class="a" style="left:597.9px;top:70.9px;width:0.6px;height:1.6px;background:#5e5e5e;"></div>
<div class="a" style="left:601.1px;top:69.5px;width:0.6px;height:3px;background:#5e5e5e;"></div>
<div class="a" style="left:604.4px;top:70.9px;width:0.6px;height:1.6px;background:#5e5e5e;"></div>
<div class="a" style="left:607.6px;top:70.9px;width:0.6px;height:1.6px;background:#5e5e5e;"></div>
<div class="a" style="left:610.8px;top:70.9px;width:0.6px;height:1.6px;background:#5e5e5e;"></div>
<div class="t" style="top:64px;font-size:7.4px;color:#ababab;left:589.48px;transform:scaleX(0.72);transform-origin:0 0;">2200</div>
<div class="a" style="left:614.1px;top:61px;width:0.8px;height:11.5px;background:#6c6c6c;"></div>
<div class="a" style="left:617.3px;top:70.9px;width:0.6px;height:1.6px;background:#5e5e5e;"></div>
<div class="a" style="left:620.5px;top:70.9px;width:0.6px;height:1.6px;background:#5e5e5e;"></div>
<div class="a" style="left:623.8px;top:70.9px;width:0.6px;height:1.6px;background:#5e5e5e;"></div>
<div class="a" style="left:627.0px;top:69.5px;width:0.6px;height:3px;background:#5e5e5e;"></div>
<div class="a" style="left:630.2px;top:70.9px;width:0.6px;height:1.6px;background:#5e5e5e;"></div>
<div class="a" style="left:633.5px;top:70.9px;width:0.6px;height:1.6px;background:#5e5e5e;"></div>
<div class="a" style="left:636.7px;top:70.9px;width:0.6px;height:1.6px;background:#5e5e5e;"></div>
<div class="t" style="top:64px;font-size:7.4px;color:#ababab;left:615.3599999999999px;transform:scaleX(0.72);transform-origin:0 0;">2400</div>
<div class="a" style="left:639.9px;top:61px;width:0.8px;height:11.5px;background:#6c6c6c;"></div>
<div class="a" style="left:643.2px;top:70.9px;width:0.6px;height:1.6px;background:#5e5e5e;"></div>
<div class="a" style="left:646.4px;top:70.9px;width:0.6px;height:1.6px;background:#5e5e5e;"></div>
<div class="a" style="left:649.6px;top:70.9px;width:0.6px;height:1.6px;background:#5e5e5e;"></div>
<div class="a" style="left:652.9px;top:69.5px;width:0.6px;height:3px;background:#5e5e5e;"></div>
<div class="a" style="left:656.1px;top:70.9px;width:0.6px;height:1.6px;background:#5e5e5e;"></div>
<div class="a" style="left:659.4px;top:70.9px;width:0.6px;height:1.6px;background:#5e5e5e;"></div>
<div class="a" style="left:662.6px;top:70.9px;width:0.6px;height:1.6px;background:#5e5e5e;"></div>
<div class="t" style="top:64px;font-size:7.4px;color:#ababab;left:641.24px;transform:scaleX(0.72);transform-origin:0 0;">2600</div>
<div class="a" style="left:665.8px;top:61px;width:0.8px;height:11.5px;background:#6c6c6c;"></div>
<div class="a" style="left:669.1px;top:70.9px;width:0.6px;height:1.6px;background:#5e5e5e;"></div>
<div class="a" style="left:672.3px;top:70.9px;width:0.6px;height:1.6px;background:#5e5e5e;"></div>
<div class="a" style="left:675.5px;top:70.9px;width:0.6px;height:1.6px;background:#5e5e5e;"></div>
<div class="a" style="left:678.8px;top:69.5px;width:0.6px;height:3px;background:#5e5e5e;"></div>
<div class="a" style="left:682.0px;top:70.9px;width:0.6px;height:1.6px;background:#5e5e5e;"></div>
<div class="a" style="left:685.2px;top:70.9px;width:0.6px;height:1.6px;background:#5e5e5e;"></div>
<div class="a" style="left:688.5px;top:70.9px;width:0.6px;height:1.6px;background:#5e5e5e;"></div>
<div class="t" style="top:64px;font-size:7.4px;color:#ababab;left:667.1199999999999px;transform:scaleX(0.72);transform-origin:0 0;">2800</div>
<div class="a" style="left:691.7px;top:61px;width:0.8px;height:11.5px;background:#6c6c6c;"></div>
<div class="a" style="left:694.9px;top:70.9px;width:0.6px;height:1.6px;background:#5e5e5e;"></div>
<div class="a" style="left:698.2px;top:70.9px;width:0.6px;height:1.6px;background:#5e5e5e;"></div>
<div class="a" style="left:701.4px;top:70.9px;width:0.6px;height:1.6px;background:#5e5e5e;"></div>
<div class="a" style="left:704.6px;top:69.5px;width:0.6px;height:3px;background:#5e5e5e;"></div>
<div class="a" style="left:707.9px;top:70.9px;width:0.6px;height:1.6px;background:#5e5e5e;"></div>
<div class="a" style="left:711.1px;top:70.9px;width:0.6px;height:1.6px;background:#5e5e5e;"></div>
<div class="a" style="left:714.3px;top:70.9px;width:0.6px;height:1.6px;background:#5e5e5e;"></div>
<div class="t" style="top:64px;font-size:7.4px;color:#ababab;left:693.0px;transform:scaleX(0.72);transform-origin:0 0;">3000</div>
<div class="a" style="left:717.6px;top:61px;width:0.8px;height:11.5px;background:#6c6c6c;"></div>
<div class="a" style="left:720.8px;top:70.9px;width:0.6px;height:1.6px;background:#5e5e5e;"></div>
<div class="a" style="left:724.0px;top:70.9px;width:0.6px;height:1.6px;background:#5e5e5e;"></div>
<div class="a" style="left:727.3px;top:70.9px;width:0.6px;height:1.6px;background:#5e5e5e;"></div>
<div class="a" style="left:730.5px;top:69.5px;width:0.6px;height:3px;background:#5e5e5e;"></div>
<div class="a" style="left:733.8px;top:70.9px;width:0.6px;height:1.6px;background:#5e5e5e;"></div>
<div class="a" style="left:737.0px;top:70.9px;width:0.6px;height:1.6px;background:#5e5e5e;"></div>
<div class="a" style="left:740.2px;top:70.9px;width:0.6px;height:1.6px;background:#5e5e5e;"></div>
<div class="t" style="top:64px;font-size:7.4px;color:#ababab;left:718.8799999999999px;transform:scaleX(0.72);transform-origin:0 0;">3200</div>
<div class="a" style="left:743.5px;top:61px;width:0.8px;height:11.5px;background:#6c6c6c;"></div>
<div class="a" style="left:746.7px;top:70.9px;width:0.6px;height:1.6px;background:#5e5e5e;"></div>
<div class="a" style="left:749.9px;top:70.9px;width:0.6px;height:1.6px;background:#5e5e5e;"></div>
<div class="a" style="left:753.2px;top:70.9px;width:0.6px;height:1.6px;background:#5e5e5e;"></div>
<div class="a" style="left:756.4px;top:69.5px;width:0.6px;height:3px;background:#5e5e5e;"></div>
<div class="a" style="left:759.6px;top:70.9px;width:0.6px;height:1.6px;background:#5e5e5e;"></div>
<div class="a" style="left:762.9px;top:70.9px;width:0.6px;height:1.6px;background:#5e5e5e;"></div>
<div class="a" style="left:766.1px;top:70.9px;width:0.6px;height:1.6px;background:#5e5e5e;"></div>
<div class="t" style="top:64px;font-size:7.4px;color:#ababab;left:744.76px;transform:scaleX(0.72);transform-origin:0 0;">3400</div>
<div class="a" style="left:769.3px;top:61px;width:0.8px;height:11.5px;background:#6c6c6c;"></div>
<div class="a" style="left:772.6px;top:70.9px;width:0.6px;height:1.6px;background:#5e5e5e;"></div>
<div class="a" style="left:775.8px;top:70.9px;width:0.6px;height:1.6px;background:#5e5e5e;"></div>
<div class="a" style="left:779.0px;top:70.9px;width:0.6px;height:1.6px;background:#5e5e5e;"></div>
<div class="a" style="left:782.3px;top:69.5px;width:0.6px;height:3px;background:#5e5e5e;"></div>
<div class="a" style="left:785.5px;top:70.9px;width:0.6px;height:1.6px;background:#5e5e5e;"></div>
<div class="a" style="left:788.7px;top:70.9px;width:0.6px;height:1.6px;background:#5e5e5e;"></div>
<div class="a" style="left:792.0px;top:70.9px;width:0.6px;height:1.6px;background:#5e5e5e;"></div>
<div class="t" style="top:64px;font-size:7.4px;color:#ababab;left:770.6399999999999px;transform:scaleX(0.72);transform-origin:0 0;">3600</div>
<div class="a" style="left:795.2px;top:61px;width:0.8px;height:11.5px;background:#6c6c6c;"></div>
<div class="a" style="left:798.5px;top:70.9px;width:0.6px;height:1.6px;background:#5e5e5e;"></div>
<div class="a" style="left:801.7px;top:70.9px;width:0.6px;height:1.6px;background:#5e5e5e;"></div>
<div class="a" style="left:804.9px;top:70.9px;width:0.6px;height:1.6px;background:#5e5e5e;"></div>
<div class="a" style="left:808.2px;top:69.5px;width:0.6px;height:3px;background:#5e5e5e;"></div>
<div class="a" style="left:811.4px;top:70.9px;width:0.6px;height:1.6px;background:#5e5e5e;"></div>
<div class="a" style="left:814.6px;top:70.9px;width:0.6px;height:1.6px;background:#5e5e5e;"></div>
<div class="a" style="left:817.9px;top:70.9px;width:0.6px;height:1.6px;background:#5e5e5e;"></div>
<div class="t" style="top:64px;font-size:7.4px;color:#ababab;left:796.52px;transform:scaleX(0.72);transform-origin:0 0;">3800</div>
<div class="a" style="left:821.1px;top:61px;width:0.8px;height:11.5px;background:#6c6c6c;"></div>
<div class="a" style="left:824.3px;top:70.9px;width:0.6px;height:1.6px;background:#5e5e5e;"></div>
<div class="a" style="left:827.6px;top:70.9px;width:0.6px;height:1.6px;background:#5e5e5e;"></div>
<div class="a" style="left:830.8px;top:70.9px;width:0.6px;height:1.6px;background:#5e5e5e;"></div>
<div class="a" style="left:834.0px;top:69.5px;width:0.6px;height:3px;background:#5e5e5e;"></div>
<div class="a" style="left:837.3px;top:70.9px;width:0.6px;height:1.6px;background:#5e5e5e;"></div>
<div class="a" style="left:840.5px;top:70.9px;width:0.6px;height:1.6px;background:#5e5e5e;"></div>
<div class="a" style="left:843.7px;top:70.9px;width:0.6px;height:1.6px;background:#5e5e5e;"></div>
<div class="t" style="top:64px;font-size:7.4px;color:#ababab;left:822.4px;transform:scaleX(0.72);transform-origin:0 0;">4000</div>
<div class="a" style="left:847.0px;top:61px;width:0.8px;height:11.5px;background:#6c6c6c;"></div>
<div class="a" style="left:850.2px;top:70.9px;width:0.6px;height:1.6px;background:#5e5e5e;"></div>
<div class="a" style="left:853.5px;top:70.9px;width:0.6px;height:1.6px;background:#5e5e5e;"></div>
<div class="a" style="left:856.7px;top:70.9px;width:0.6px;height:1.6px;background:#5e5e5e;"></div>
<div class="t" style="top:64px;font-size:7.4px;color:#ababab;left:848.28px;transform:scaleX(0.72);transform-origin:0 0;">4200</div>
<div class="a" style="left:25px;top:72.2px;width:11px;height:0.8px;background:#6c6c6c;"></div>
<div class="a" style="left:34.4px;top:75.8px;width:1.6px;height:0.6px;background:#5e5e5e;"></div>
<div class="a" style="left:34.4px;top:79.4px;width:1.6px;height:0.6px;background:#5e5e5e;"></div>
<div class="a" style="left:34.4px;top:83.0px;width:1.6px;height:0.6px;background:#5e5e5e;"></div>
<div class="a" style="left:33px;top:86.5px;width:3px;height:0.6px;background:#5e5e5e;"></div>
<div class="a" style="left:34.4px;top:90.1px;width:1.6px;height:0.6px;background:#5e5e5e;"></div>
<div class="a" style="left:34.4px;top:93.7px;width:1.6px;height:0.6px;background:#5e5e5e;"></div>
<div class="a" style="left:34.4px;top:97.3px;width:1.6px;height:0.6px;background:#5e5e5e;"></div>
<div class="t" style="top:73px;font-size:7.4px;color:#adadad;left:-371.00px;width:800px;text-align:center;">8</div>
<div class="t" style="top:82px;font-size:7.4px;color:#adadad;left:-371.00px;width:800px;text-align:center;">0</div>
<div class="t" style="top:90px;font-size:7.4px;color:#adadad;left:-371.00px;width:800px;text-align:center;">0</div>
<div class="a" style="left:25px;top:100.9px;width:11px;height:0.8px;background:#6c6c6c;"></div>
<div class="a" style="left:34.4px;top:104.5px;width:1.6px;height:0.6px;background:#5e5e5e;"></div>
<div class="a" style="left:34.4px;top:108.1px;width:1.6px;height:0.6px;background:#5e5e5e;"></div>
<div class="a" style="left:34.4px;top:111.7px;width:1.6px;height:0.6px;background:#5e5e5e;"></div>
<div class="a" style="left:33px;top:115.2px;width:3px;height:0.6px;background:#5e5e5e;"></div>
<div class="a" style="left:34.4px;top:118.8px;width:1.6px;height:0.6px;background:#5e5e5e;"></div>
<div class="a" style="left:34.4px;top:122.4px;width:1.6px;height:0.6px;background:#5e5e5e;"></div>
<div class="a" style="left:34.4px;top:126.0px;width:1.6px;height:0.6px;background:#5e5e5e;"></div>
<div class="t" style="top:102px;font-size:7.4px;color:#adadad;left:-371.00px;width:800px;text-align:center;">6</div>
<div class="t" style="top:110px;font-size:7.4px;color:#adadad;left:-371.00px;width:800px;text-align:center;">0</div>
<div class="t" style="top:119px;font-size:7.4px;color:#adadad;left:-371.00px;width:800px;text-align:center;">0</div>
<div class="a" style="left:25px;top:129.6px;width:11px;height:0.8px;background:#6c6c6c;"></div>
<div class="a" style="left:34.4px;top:133.2px;width:1.6px;height:0.6px;background:#5e5e5e;"></div>
<div class="a" style="left:34.4px;top:136.8px;width:1.6px;height:0.6px;background:#5e5e5e;"></div>
<div class="a" style="left:34.4px;top:140.4px;width:1.6px;height:0.6px;background:#5e5e5e;"></div>
<div class="a" style="left:33px;top:143.9px;width:3px;height:0.6px;background:#5e5e5e;"></div>
<div class="a" style="left:34.4px;top:147.5px;width:1.6px;height:0.6px;background:#5e5e5e;"></div>
<div class="a" style="left:34.4px;top:151.1px;width:1.6px;height:0.6px;background:#5e5e5e;"></div>
<div class="a" style="left:34.4px;top:154.7px;width:1.6px;height:0.6px;background:#5e5e5e;"></div>
<div class="t" style="top:131px;font-size:7.4px;color:#adadad;left:-371.00px;width:800px;text-align:center;">4</div>
<div class="t" style="top:139px;font-size:7.4px;color:#adadad;left:-371.00px;width:800px;text-align:center;">0</div>
<div class="t" style="top:147px;font-size:7.4px;color:#adadad;left:-371.00px;width:800px;text-align:center;">0</div>
<div class="a" style="left:25px;top:158.3px;width:11px;height:0.8px;background:#6c6c6c;"></div>
<div class="a" style="left:34.4px;top:161.9px;width:1.6px;height:0.6px;background:#5e5e5e;"></div>
<div class="a" style="left:34.4px;top:165.5px;width:1.6px;height:0.6px;background:#5e5e5e;"></div>
<div class="a" style="left:34.4px;top:169.1px;width:1.6px;height:0.6px;background:#5e5e5e;"></div>
<div class="a" style="left:33px;top:172.7px;width:3px;height:0.6px;background:#5e5e5e;"></div>
<div class="a" style="left:34.4px;top:176.2px;width:1.6px;height:0.6px;background:#5e5e5e;"></div>
<div class="a" style="left:34.4px;top:179.8px;width:1.6px;height:0.6px;background:#5e5e5e;"></div>
<div class="a" style="left:34.4px;top:183.4px;width:1.6px;height:0.6px;background:#5e5e5e;"></div>
<div class="t" style="top:159px;font-size:7.4px;color:#adadad;left:-371.00px;width:800px;text-align:center;">2</div>
<div class="t" style="top:168px;font-size:7.4px;color:#adadad;left:-371.00px;width:800px;text-align:center;">0</div>
<div class="t" style="top:176px;font-size:7.4px;color:#adadad;left:-371.00px;width:800px;text-align:center;">0</div>
<div class="a" style="left:25px;top:187.0px;width:11px;height:0.8px;background:#6c6c6c;"></div>
<div class="a" style="left:34.4px;top:190.6px;width:1.6px;height:0.6px;background:#5e5e5e;"></div>
<div class="a" style="left:34.4px;top:194.2px;width:1.6px;height:0.6px;background:#5e5e5e;"></div>
<div class="a" style="left:34.4px;top:197.8px;width:1.6px;height:0.6px;background:#5e5e5e;"></div>
<div class="a" style="left:33px;top:201.3px;width:3px;height:0.6px;background:#5e5e5e;"></div>
<div class="a" style="left:34.4px;top:204.9px;width:1.6px;height:0.6px;background:#5e5e5e;"></div>
<div class="a" style="left:34.4px;top:208.5px;width:1.6px;height:0.6px;background:#5e5e5e;"></div>
<div class="a" style="left:34.4px;top:212.1px;width:1.6px;height:0.6px;background:#5e5e5e;"></div>
<div class="t" style="top:188px;font-size:7.4px;color:#adadad;left:-371.00px;width:800px;text-align:center;">0</div>
<div class="a" style="left:25px;top:215.7px;width:11px;height:0.8px;background:#6c6c6c;"></div>
<div class="a" style="left:34.4px;top:219.3px;width:1.6px;height:0.6px;background:#5e5e5e;"></div>
<div class="a" style="left:34.4px;top:222.9px;width:1.6px;height:0.6px;background:#5e5e5e;"></div>
<div class="a" style="left:34.4px;top:226.5px;width:1.6px;height:0.6px;background:#5e5e5e;"></div>
<div class="a" style="left:33px;top:230.0px;width:3px;height:0.6px;background:#5e5e5e;"></div>
<div class="a" style="left:34.4px;top:233.6px;width:1.6px;height:0.6px;background:#5e5e5e;"></div>
<div class="a" style="left:34.4px;top:237.2px;width:1.6px;height:0.6px;background:#5e5e5e;"></div>
<div class="a" style="left:34.4px;top:240.8px;width:1.6px;height:0.6px;background:#5e5e5e;"></div>
<div class="t" style="top:217px;font-size:7.4px;color:#adadad;left:-371.00px;width:800px;text-align:center;">2</div>
<div class="t" style="top:225px;font-size:7.4px;color:#adadad;left:-371.00px;width:800px;text-align:center;">0</div>
<div class="t" style="top:233px;font-size:7.4px;color:#adadad;left:-371.00px;width:800px;text-align:center;">0</div>
<div class="a" style="left:25px;top:244.4px;width:11px;height:0.8px;background:#6c6c6c;"></div>
<div class="a" style="left:34.4px;top:248.0px;width:1.6px;height:0.6px;background:#5e5e5e;"></div>
<div class="a" style="left:34.4px;top:251.6px;width:1.6px;height:0.6px;background:#5e5e5e;"></div>
<div class="a" style="left:34.4px;top:255.2px;width:1.6px;height:0.6px;background:#5e5e5e;"></div>
<div class="a" style="left:33px;top:258.8px;width:3px;height:0.6px;background:#5e5e5e;"></div>
<div class="a" style="left:34.4px;top:262.3px;width:1.6px;height:0.6px;background:#5e5e5e;"></div>
<div class="a" style="left:34.4px;top:265.9px;width:1.6px;height:0.6px;background:#5e5e5e;"></div>
<div class="a" style="left:34.4px;top:269.5px;width:1.6px;height:0.6px;background:#5e5e5e;"></div>
<div class="t" style="top:245px;font-size:7.4px;color:#adadad;left:-371.00px;width:800px;text-align:center;">4</div>
<div class="t" style="top:254px;font-size:7.4px;color:#adadad;left:-371.00px;width:800px;text-align:center;">0</div>
<div class="t" style="top:262px;font-size:7.4px;color:#adadad;left:-371.00px;width:800px;text-align:center;">0</div>
<div class="a" style="left:25px;top:273.1px;width:11px;height:0.8px;background:#6c6c6c;"></div>
<div class="a" style="left:34.4px;top:276.7px;width:1.6px;height:0.6px;background:#5e5e5e;"></div>
<div class="a" style="left:34.4px;top:280.3px;width:1.6px;height:0.6px;background:#5e5e5e;"></div>
<div class="a" style="left:34.4px;top:283.9px;width:1.6px;height:0.6px;background:#5e5e5e;"></div>
<div class="a" style="left:33px;top:287.5px;width:3px;height:0.6px;background:#5e5e5e;"></div>
<div class="a" style="left:34.4px;top:291.0px;width:1.6px;height:0.6px;background:#5e5e5e;"></div>
<div class="a" style="left:34.4px;top:294.6px;width:1.6px;height:0.6px;background:#5e5e5e;"></div>
<div class="a" style="left:34.4px;top:298.2px;width:1.6px;height:0.6px;background:#5e5e5e;"></div>
<div class="t" style="top:274px;font-size:7.4px;color:#adadad;left:-371.00px;width:800px;text-align:center;">6</div>
<div class="t" style="top:282px;font-size:7.4px;color:#adadad;left:-371.00px;width:800px;text-align:center;">0</div>
<div class="t" style="top:291px;font-size:7.4px;color:#adadad;left:-371.00px;width:800px;text-align:center;">0</div>
<div class="a" style="left:25px;top:301.8px;width:11px;height:0.8px;background:#6c6c6c;"></div>
<div class="a" style="left:34.4px;top:305.4px;width:1.6px;height:0.6px;background:#5e5e5e;"></div>
<div class="a" style="left:34.4px;top:309.0px;width:1.6px;height:0.6px;background:#5e5e5e;"></div>
<div class="a" style="left:34.4px;top:312.6px;width:1.6px;height:0.6px;background:#5e5e5e;"></div>
<div class="a" style="left:33px;top:316.2px;width:3px;height:0.6px;background:#5e5e5e;"></div>
<div class="a" style="left:34.4px;top:319.7px;width:1.6px;height:0.6px;background:#5e5e5e;"></div>
<div class="a" style="left:34.4px;top:323.3px;width:1.6px;height:0.6px;background:#5e5e5e;"></div>
<div class="a" style="left:34.4px;top:326.9px;width:1.6px;height:0.6px;background:#5e5e5e;"></div>
<div class="t" style="top:303px;font-size:7.4px;color:#adadad;left:-371.00px;width:800px;text-align:center;">8</div>
<div class="t" style="top:311px;font-size:7.4px;color:#adadad;left:-371.00px;width:800px;text-align:center;">0</div>
<div class="t" style="top:319px;font-size:7.4px;color:#adadad;left:-371.00px;width:800px;text-align:center;">0</div>
<div class="a" style="left:25px;top:330.5px;width:11px;height:0.8px;background:#6c6c6c;"></div>
<div class="a" style="left:34.4px;top:334.1px;width:1.6px;height:0.6px;background:#5e5e5e;"></div>
<div class="a" style="left:34.4px;top:337.7px;width:1.6px;height:0.6px;background:#5e5e5e;"></div>
<div class="a" style="left:34.4px;top:341.3px;width:1.6px;height:0.6px;background:#5e5e5e;"></div>
<div class="a" style="left:33px;top:344.9px;width:3px;height:0.6px;background:#5e5e5e;"></div>
<div class="a" style="left:34.4px;top:348.4px;width:1.6px;height:0.6px;background:#5e5e5e;"></div>
<div class="a" style="left:34.4px;top:352.0px;width:1.6px;height:0.6px;background:#5e5e5e;"></div>
<div class="a" style="left:34.4px;top:355.6px;width:1.6px;height:0.6px;background:#5e5e5e;"></div>
<div class="t" style="top:333px;font-size:5.6px;color:#9c9c9c;left:-371.70px;width:800px;text-align:center;">1</div>
<div class="t" style="top:340px;font-size:5.6px;color:#9c9c9c;left:-371.70px;width:800px;text-align:center;">0</div>
<div class="t" style="top:346px;font-size:5.6px;color:#9c9c9c;left:-371.70px;width:800px;text-align:center;">0</div>
<div class="t" style="top:353px;font-size:5.6px;color:#9c9c9c;left:-371.70px;width:800px;text-align:center;">0</div>
<div class="a" style="left:25px;top:359.2px;width:11px;height:0.8px;background:#6c6c6c;"></div>
<div class="a" style="left:34.4px;top:362.8px;width:1.6px;height:0.6px;background:#5e5e5e;"></div>
<div class="a" style="left:34.4px;top:366.4px;width:1.6px;height:0.6px;background:#5e5e5e;"></div>
<div class="a" style="left:34.4px;top:370.0px;width:1.6px;height:0.6px;background:#5e5e5e;"></div>
<div class="a" style="left:33px;top:373.6px;width:3px;height:0.6px;background:#5e5e5e;"></div>
<div class="a" style="left:34.4px;top:377.1px;width:1.6px;height:0.6px;background:#5e5e5e;"></div>
<div class="a" style="left:34.4px;top:380.7px;width:1.6px;height:0.6px;background:#5e5e5e;"></div>
<div class="a" style="left:34.4px;top:384.3px;width:1.6px;height:0.6px;background:#5e5e5e;"></div>
<div class="t" style="top:362px;font-size:5.6px;color:#9c9c9c;left:-371.70px;width:800px;text-align:center;">1</div>
<div class="t" style="top:368px;font-size:5.6px;color:#9c9c9c;left:-371.70px;width:800px;text-align:center;">2</div>
<div class="t" style="top:375px;font-size:5.6px;color:#9c9c9c;left:-371.70px;width:800px;text-align:center;">0</div>
<div class="t" style="top:382px;font-size:5.6px;color:#9c9c9c;left:-371.70px;width:800px;text-align:center;">0</div>
<div class="a" style="left:25px;top:387.9px;width:11px;height:0.8px;background:#6c6c6c;"></div>
<div class="a" style="left:34.4px;top:391.5px;width:1.6px;height:0.6px;background:#5e5e5e;"></div>
<div class="a" style="left:34.4px;top:395.1px;width:1.6px;height:0.6px;background:#5e5e5e;"></div>
<div class="a" style="left:34.4px;top:398.7px;width:1.6px;height:0.6px;background:#5e5e5e;"></div>
<div class="a" style="left:33px;top:402.2px;width:3px;height:0.6px;background:#5e5e5e;"></div>
<div class="a" style="left:34.4px;top:405.8px;width:1.6px;height:0.6px;background:#5e5e5e;"></div>
<div class="a" style="left:34.4px;top:409.4px;width:1.6px;height:0.6px;background:#5e5e5e;"></div>
<div class="a" style="left:34.4px;top:413.0px;width:1.6px;height:0.6px;background:#5e5e5e;"></div>
<div class="t" style="top:390px;font-size:5.6px;color:#9c9c9c;left:-371.70px;width:800px;text-align:center;">1</div>
<div class="t" style="top:397px;font-size:5.6px;color:#9c9c9c;left:-371.70px;width:800px;text-align:center;">4</div>
<div class="t" style="top:404px;font-size:5.6px;color:#9c9c9c;left:-371.70px;width:800px;text-align:center;">0</div>
<div class="t" style="top:410px;font-size:5.6px;color:#9c9c9c;left:-371.70px;width:800px;text-align:center;">0</div>
<div class="a" style="left:25px;top:416.6px;width:11px;height:0.8px;background:#6c6c6c;"></div>
<div class="a" style="left:34.4px;top:420.2px;width:1.6px;height:0.6px;background:#5e5e5e;"></div>
<div class="a" style="left:34.4px;top:423.8px;width:1.6px;height:0.6px;background:#5e5e5e;"></div>
<div class="a" style="left:34.4px;top:427.4px;width:1.6px;height:0.6px;background:#5e5e5e;"></div>
<div class="a" style="left:33px;top:431.0px;width:3px;height:0.6px;background:#5e5e5e;"></div>
<div class="a" style="left:34.4px;top:434.5px;width:1.6px;height:0.6px;background:#5e5e5e;"></div>
<div class="a" style="left:34.4px;top:438.1px;width:1.6px;height:0.6px;background:#5e5e5e;"></div>
<div class="a" style="left:34.4px;top:441.7px;width:1.6px;height:0.6px;background:#5e5e5e;"></div>
<div class="t" style="top:419px;font-size:5.6px;color:#9c9c9c;left:-371.70px;width:800px;text-align:center;">1</div>
<div class="t" style="top:426px;font-size:5.6px;color:#9c9c9c;left:-371.70px;width:800px;text-align:center;">6</div>
<div class="t" style="top:432px;font-size:5.6px;color:#9c9c9c;left:-371.70px;width:800px;text-align:center;">0</div>
<div class="t" style="top:439px;font-size:5.6px;color:#9c9c9c;left:-371.70px;width:800px;text-align:center;">0</div>
<div class="a" style="left:25px;top:445.3px;width:11px;height:0.8px;background:#6c6c6c;"></div>
<div class="a" style="left:34.4px;top:448.9px;width:1.6px;height:0.6px;background:#5e5e5e;"></div>
<div class="a" style="left:34.4px;top:452.5px;width:1.6px;height:0.6px;background:#5e5e5e;"></div>
<div class="a" style="left:34.4px;top:456.1px;width:1.6px;height:0.6px;background:#5e5e5e;"></div>
<div class="a" style="left:33px;top:459.7px;width:3px;height:0.6px;background:#5e5e5e;"></div>
<div class="a" style="left:34.4px;top:463.2px;width:1.6px;height:0.6px;background:#5e5e5e;"></div>
<div class="a" style="left:34.4px;top:466.8px;width:1.6px;height:0.6px;background:#5e5e5e;"></div>
<div class="a" style="left:34.4px;top:470.4px;width:1.6px;height:0.6px;background:#5e5e5e;"></div>
<div class="t" style="top:448px;font-size:5.6px;color:#9c9c9c;left:-371.70px;width:800px;text-align:center;">1</div>
<div class="t" style="top:454px;font-size:5.6px;color:#9c9c9c;left:-371.70px;width:800px;text-align:center;">8</div>
<div class="t" style="top:461px;font-size:5.6px;color:#9c9c9c;left:-371.70px;width:800px;text-align:center;">0</div>
<div class="t" style="top:468px;font-size:5.6px;color:#9c9c9c;left:-371.70px;width:800px;text-align:center;">0</div>
<div class="a" style="left:25px;top:474.0px;width:11px;height:0.8px;background:#6c6c6c;"></div>
<div class="a" style="left:34.4px;top:477.6px;width:1.6px;height:0.6px;background:#5e5e5e;"></div>
<div class="a" style="left:34.4px;top:481.2px;width:1.6px;height:0.6px;background:#5e5e5e;"></div>
<div class="a" style="left:34.4px;top:484.8px;width:1.6px;height:0.6px;background:#5e5e5e;"></div>
<div class="a" style="left:33px;top:488.4px;width:3px;height:0.6px;background:#5e5e5e;"></div>
<div class="a" style="left:34.4px;top:491.9px;width:1.6px;height:0.6px;background:#5e5e5e;"></div>
<div class="a" style="left:34.4px;top:495.5px;width:1.6px;height:0.6px;background:#5e5e5e;"></div>
<div class="a" style="left:34.4px;top:499.1px;width:1.6px;height:0.6px;background:#5e5e5e;"></div>
<div class="t" style="top:477px;font-size:5.6px;color:#9c9c9c;left:-371.70px;width:800px;text-align:center;">2</div>
<div class="t" style="top:483px;font-size:5.6px;color:#9c9c9c;left:-371.70px;width:800px;text-align:center;">0</div>
<div class="t" style="top:490px;font-size:5.6px;color:#9c9c9c;left:-371.70px;width:800px;text-align:center;">0</div>
<div class="t" style="top:496px;font-size:5.6px;color:#9c9c9c;left:-371.70px;width:800px;text-align:center;">0</div>
<div class="a" style="left:25px;top:502.7px;width:11px;height:0.8px;background:#6c6c6c;"></div>
<div class="a" style="left:34.4px;top:506.3px;width:1.6px;height:0.6px;background:#5e5e5e;"></div>
<div class="a" style="left:34.4px;top:509.9px;width:1.6px;height:0.6px;background:#5e5e5e;"></div>
<div class="a" style="left:34.4px;top:513.5px;width:1.6px;height:0.6px;background:#5e5e5e;"></div>
<div class="a" style="left:33px;top:517.0px;width:3px;height:0.6px;background:#5e5e5e;"></div>
<div class="a" style="left:34.4px;top:520.6px;width:1.6px;height:0.6px;background:#5e5e5e;"></div>
<div class="a" style="left:34.4px;top:524.2px;width:1.6px;height:0.6px;background:#5e5e5e;"></div>
<div class="a" style="left:34.4px;top:527.8px;width:1.6px;height:0.6px;background:#5e5e5e;"></div>
<div class="t" style="top:505px;font-size:5.6px;color:#9c9c9c;left:-371.70px;width:800px;text-align:center;">2</div>
<div class="t" style="top:512px;font-size:5.6px;color:#9c9c9c;left:-371.70px;width:800px;text-align:center;">2</div>
<div class="t" style="top:518px;font-size:5.6px;color:#9c9c9c;left:-371.70px;width:800px;text-align:center;">0</div>
<div class="t" style="top:525px;font-size:5.6px;color:#9c9c9c;left:-371.70px;width:800px;text-align:center;">0</div>
<div class="a" style="left:25px;top:531.4px;width:11px;height:0.8px;background:#6c6c6c;"></div>
<div class="a" style="left:34.4px;top:535.0px;width:1.6px;height:0.6px;background:#5e5e5e;"></div>
<div class="a" style="left:34.4px;top:538.6px;width:1.6px;height:0.6px;background:#5e5e5e;"></div>
<div class="a" style="left:34.4px;top:542.2px;width:1.6px;height:0.6px;background:#5e5e5e;"></div>
<div class="a" style="left:33px;top:545.8px;width:3px;height:0.6px;background:#5e5e5e;"></div>
<div class="a" style="left:34.4px;top:549.3px;width:1.6px;height:0.6px;background:#5e5e5e;"></div>
<div class="a" style="left:34.4px;top:552.9px;width:1.6px;height:0.6px;background:#5e5e5e;"></div>
<div class="a" style="left:34.4px;top:556.5px;width:1.6px;height:0.6px;background:#5e5e5e;"></div>
<div class="t" style="top:534px;font-size:5.6px;color:#9c9c9c;left:-371.70px;width:800px;text-align:center;">2</div>
<div class="t" style="top:541px;font-size:5.6px;color:#9c9c9c;left:-371.70px;width:800px;text-align:center;">4</div>
<div class="t" style="top:547px;font-size:5.6px;color:#9c9c9c;left:-371.70px;width:800px;text-align:center;">0</div>
<div class="t" style="top:554px;font-size:5.6px;color:#9c9c9c;left:-371.70px;width:800px;text-align:center;">0</div>
<div class="a" style="left:25px;top:560.1px;width:11px;height:0.8px;background:#6c6c6c;"></div>
<div class="a" style="left:34.4px;top:563.7px;width:1.6px;height:0.6px;background:#5e5e5e;"></div>
<div class="a" style="left:34.4px;top:567.3px;width:1.6px;height:0.6px;background:#5e5e5e;"></div>
<div class="a" style="left:34.4px;top:570.9px;width:1.6px;height:0.6px;background:#5e5e5e;"></div>
<div class="a" style="left:33px;top:574.4px;width:3px;height:0.6px;background:#5e5e5e;"></div>
<div class="a" style="left:34.4px;top:578.0px;width:1.6px;height:0.6px;background:#5e5e5e;"></div>
<div class="a" style="left:34.4px;top:581.6px;width:1.6px;height:0.6px;background:#5e5e5e;"></div>
<div class="a" style="left:34.4px;top:585.2px;width:1.6px;height:0.6px;background:#5e5e5e;"></div>
<div class="t" style="top:563px;font-size:5.6px;color:#9c9c9c;left:-371.70px;width:800px;text-align:center;">2</div>
<div class="t" style="top:569px;font-size:5.6px;color:#9c9c9c;left:-371.70px;width:800px;text-align:center;">6</div>
<div class="t" style="top:576px;font-size:5.6px;color:#9c9c9c;left:-371.70px;width:800px;text-align:center;">0</div>
<div class="t" style="top:582px;font-size:5.6px;color:#9c9c9c;left:-371.70px;width:800px;text-align:center;">0</div>
<div class="a" style="left:25px;top:588.8px;width:11px;height:0.8px;background:#6c6c6c;"></div>
<div class="a" style="left:34.4px;top:592.4px;width:1.6px;height:0.6px;background:#5e5e5e;"></div>
<div class="a" style="left:34.4px;top:596.0px;width:1.6px;height:0.6px;background:#5e5e5e;"></div>
<div class="a" style="left:34.4px;top:599.6px;width:1.6px;height:0.6px;background:#5e5e5e;"></div>
<div class="a" style="left:33px;top:603.1px;width:3px;height:0.6px;background:#5e5e5e;"></div>
<div class="a" style="left:34.4px;top:606.7px;width:1.6px;height:0.6px;background:#5e5e5e;"></div>
<div class="a" style="left:34.4px;top:610.3px;width:1.6px;height:0.6px;background:#5e5e5e;"></div>
<div class="a" style="left:34.4px;top:613.9px;width:1.6px;height:0.6px;background:#5e5e5e;"></div>
<div class="t" style="top:591px;font-size:5.6px;color:#9c9c9c;left:-371.70px;width:800px;text-align:center;">2</div>
<div class="t" style="top:598px;font-size:5.6px;color:#9c9c9c;left:-371.70px;width:800px;text-align:center;">8</div>
<div class="t" style="top:605px;font-size:5.6px;color:#9c9c9c;left:-371.70px;width:800px;text-align:center;">0</div>
<div class="t" style="top:611px;font-size:5.6px;color:#9c9c9c;left:-371.70px;width:800px;text-align:center;">0</div>
<div class="a" style="left:25px;top:617.5px;width:11px;height:0.8px;background:#6c6c6c;"></div>
<div class="a" style="left:34.4px;top:621.1px;width:1.6px;height:0.6px;background:#5e5e5e;"></div>
<div class="a" style="left:34.4px;top:624.7px;width:1.6px;height:0.6px;background:#5e5e5e;"></div>
<div class="a" style="left:34.4px;top:628.3px;width:1.6px;height:0.6px;background:#5e5e5e;"></div>
<div class="a" style="left:33px;top:631.9px;width:3px;height:0.6px;background:#5e5e5e;"></div>
<div class="a" style="left:34.4px;top:635.4px;width:1.6px;height:0.6px;background:#5e5e5e;"></div>
<div class="a" style="left:34.4px;top:639.0px;width:1.6px;height:0.6px;background:#5e5e5e;"></div>
<div class="a" style="left:34.4px;top:642.6px;width:1.6px;height:0.6px;background:#5e5e5e;"></div>
<div class="t" style="top:620px;font-size:5.6px;color:#9c9c9c;left:-371.70px;width:800px;text-align:center;">3</div>
<div class="t" style="top:627px;font-size:5.6px;color:#9c9c9c;left:-371.70px;width:800px;text-align:center;">0</div>
<div class="t" style="top:633px;font-size:5.6px;color:#9c9c9c;left:-371.70px;width:800px;text-align:center;">0</div>
<div class="t" style="top:640px;font-size:5.6px;color:#9c9c9c;left:-371.70px;width:800px;text-align:center;">0</div>
<div class="a" style="left:25px;top:646.2px;width:11px;height:0.8px;background:#6c6c6c;"></div>
<div class="a" style="left:34.4px;top:649.8px;width:1.6px;height:0.6px;background:#5e5e5e;"></div>
<div class="a" style="left:34.4px;top:653.4px;width:1.6px;height:0.6px;background:#5e5e5e;"></div>
<div class="a" style="left:34.4px;top:657.0px;width:1.6px;height:0.6px;background:#5e5e5e;"></div>
<div class="a" style="left:33px;top:660.6px;width:3px;height:0.6px;background:#5e5e5e;"></div>
<div class="a" style="left:34.4px;top:664.1px;width:1.6px;height:0.6px;background:#5e5e5e;"></div>
<div class="a" style="left:34.4px;top:667.7px;width:1.6px;height:0.6px;background:#5e5e5e;"></div>
<div class="a" style="left:34.4px;top:671.3px;width:1.6px;height:0.6px;background:#5e5e5e;"></div>
<div class="t" style="top:649px;font-size:5.6px;color:#9c9c9c;left:-371.70px;width:800px;text-align:center;">3</div>
<div class="t" style="top:655px;font-size:5.6px;color:#9c9c9c;left:-371.70px;width:800px;text-align:center;">2</div>
<div class="t" style="top:662px;font-size:5.6px;color:#9c9c9c;left:-371.70px;width:800px;text-align:center;">0</div>
<div class="t" style="top:669px;font-size:5.6px;color:#9c9c9c;left:-371.70px;width:800px;text-align:center;">0</div>
<div class="a" style="left:25px;top:674.9px;width:11px;height:0.8px;background:#6c6c6c;"></div>
<div class="a" style="left:34.4px;top:678.5px;width:1.6px;height:0.6px;background:#5e5e5e;"></div>
<div class="a" style="left:34.4px;top:682.1px;width:1.6px;height:0.6px;background:#5e5e5e;"></div>
<div class="a" style="left:34.4px;top:685.7px;width:1.6px;height:0.6px;background:#5e5e5e;"></div>
<div class="a" style="left:33px;top:689.2px;width:3px;height:0.6px;background:#5e5e5e;"></div>
<div class="a" style="left:34.4px;top:692.8px;width:1.6px;height:0.6px;background:#5e5e5e;"></div>
<div class="a" style="left:34.4px;top:696.4px;width:1.6px;height:0.6px;background:#5e5e5e;"></div>
<div class="a" style="left:34.4px;top:700.0px;width:1.6px;height:0.6px;background:#5e5e5e;"></div>
<div class="t" style="top:677px;font-size:5.6px;color:#9c9c9c;left:-371.70px;width:800px;text-align:center;">3</div>
<div class="t" style="top:684px;font-size:5.6px;color:#9c9c9c;left:-371.70px;width:800px;text-align:center;">4</div>
<div class="t" style="top:691px;font-size:5.6px;color:#9c9c9c;left:-371.70px;width:800px;text-align:center;">0</div>
<div class="t" style="top:697px;font-size:5.6px;color:#9c9c9c;left:-371.70px;width:800px;text-align:center;">0</div>
<div class="a" style="left:25px;top:703.6px;width:11px;height:0.8px;background:#6c6c6c;"></div>
<div class="a" style="left:34.4px;top:707.2px;width:1.6px;height:0.6px;background:#5e5e5e;"></div>
<div class="t" style="top:706px;font-size:5.6px;color:#9c9c9c;left:-371.70px;width:800px;text-align:center;">3</div>
<div class="a" style="left:25px;top:711px;width:834px;height:9px;background:#535353;"></div>
<div class="a" style="left:65px;top:712px;width:105px;height:8px;background:#575757;"></div>
<div class="t" style="top:713px;font-size:6.0px;color:#e0e0e0;left:30px;">20.66%</div>
<div class="a" style="left:64px;top:712px;width:0.8px;height:8px;background:#3e3e3e;"></div>
<div class="t" style="top:713px;font-size:6.0px;color:#d8d8d8;left:71px;">2232 px x 2854 px (250 ppi)</div>
<div class="t" style="top:713px;font-size:7px;color:#bbb;left:165px;">›</div>
<div class="a" style="left:859px;top:40px;width:221px;height:680px;background:#404040;"></div>
<div class="a" style="left:859px;top:40px;width:221px;height:9px;background:#3e3e3e;"></div>
<svg class="a" style="left:886px;top:42.5px;" width="6" height="4" viewBox="0 0 6 4"><path d="M2.5 0 L0.5 2 L2.5 4Z M5.5 0 L3.5 2 L5.5 4Z" fill="#c8c8c8"/></svg>
<svg class="a" style="left:1064px;top:42.5px;" width="6" height="4" viewBox="0 0 6 4"><path d="M0.5 0 L2.5 2 L0.5 4Z M3.5 0 L5.5 2 L3.5 4Z" fill="#c8c8c8"/></svg>
<div class="a" style="left:870px;top:49px;width:25px;height:671px;background:#4a4a4a;"></div>
<div class="a" style="left:870px;top:49px;width:25px;height:153px;background:#535353;"></div>
<div class="a" style="left:870px;top:97px;width:25px;height:1px;background:#404040;"></div>
<div class="a" style="left:870px;top:146px;width:25px;height:1px;background:#404040;"></div>
<div class="a" style="left:870px;top:175px;width:25px;height:1px;background:#404040;"></div>
<div class="a" style="left:870px;top:201.5px;width:25px;height:1px;background:#404040;"></div>
<svg class="a" style="left:876px;top:57px;" width="14" height="14" viewBox="0 0 14 14"><path d="M1 2 L5 2 M1 4.5 L5 4.5 M1 7 L5 7" stroke="#e4e4e4" stroke-width="0.9"/><path d="M12.5 1.5 L6 9" stroke="#e4e4e4" stroke-width="1.6"/><path d="M6 8.5 Q3 9 3 12.5 Q6 12.5 7 10Z" fill="#e4e4e4"/></svg>
<svg class="a" style="left:876px;top:77px;" width="14" height="14" viewBox="0 0 14 14"><path d="M1 4 L13 4 M1 10 L13 10" stroke="#e4e4e4" stroke-width="1.1"/><circle cx="4" cy="4" r="2" fill="#e4e4e4"/><path d="M7.5 7 L11 10 L7.5 13Z" fill="#e4e4e4"/></svg>
<div class="t" style="top:107px;font-size:11.5px;color:#e4e4e4;left:482.50px;width:800px;text-align:center;">A|</div>
<div class="t" style="top:126px;font-size:11.5px;font-weight:bold;color:#e4e4e4;left:482.50px;width:800px;text-align:center;">¶</div>
<div class="t" style="top:153px;font-size:13.5px;color:#e4e4e4;font-family:'Liberation Serif';left:482.50px;width:800px;text-align:center;font-style:italic;">A</div>
<svg class="a" style="left:876px;top:182px;" width="13" height="13" viewBox="0 0 13 13"><path d="M6.5 1 L12 4 L12 9.5 L6.5 12.5 L1 9.5 L1 4Z M1 4 L6.5 7 L12 4 M6.5 7 L6.5 12.5" stroke="#e4e4e4" stroke-width="1" fill="none"/></svg>
<div class="a" style="left:896px;top:49px;width:180px;height:336px;background:#535353;"></div>
<div class="a" style="left:896px;top:49px;width:113.5px;height:19.3px;background:#474747;"></div>
<div class="a" style="left:1050px;top:49px;width:26px;height:19.3px;background:#474747;"></div>
<div class="t" style="top:56px;font-size:6.0px;color:#a9a9a9;left:901px;">Swatc</div>
<div class="t" style="top:56px;font-size:6.0px;color:#a9a9a9;left:924px;">Gradi</div>
<div class="t" style="top:56px;font-size:6.0px;color:#a9a9a9;left:946.6px;">Patter</div>
<div class="t" style="top:56px;font-size:6.0px;color:#a9a9a9;left:969px;">Histor</div>
<div class="t" style="top:56px;font-size:6.0px;color:#a9a9a9;left:992px;">Actior</div>
<div class="t" style="top:56px;font-size:6.15px;font-weight:bold;color:#f2f2f2;left:1014.7px;">Properties</div>
<svg class="a" style="left:1064px;top:55px;" width="9" height="8" viewBox="0 0 9 8"><path d="M0.5 1 L8.5 1 M0.5 4 L8.5 4 M0.5 7 L8.5 7" stroke="#c8c8c8" stroke-width="1.2"/></svg>
<div class="a" style="left:903.5px;top:73.4px;width:13px;height:14px;background:#3a3a3a;"></div>
<svg class="a" style="left:905px;top:75px;" width="10" height="11" viewBox="0 0 10 11"><path d="M2 1 L6 1 L8.5 3.5 L8.5 10 L2 10Z" fill="none" stroke="#e8e8e8" stroke-width="1"/><path d="M3 6 L7.5 6 L7.5 9 L3 9Z" fill="#e8e8e8"/></svg>
<div class="t" style="top:79px;font-size:6.3px;color:#d4d4d4;left:920px;">Document</div>
<div class="a" style="left:896px;top:93px;width:180px;height:1px;background:#444;"></div>
<div class="a" style="left:1066px;top:96px;width:9px;height:271px;background:#4a4a4a;"></div>
<div class="a" style="left:1067px;top:103px;width:7px;height:225px;background:#5f5f5f;"></div>
<svg class="a" style="left:1067px;top:97px;" width="7" height="5" viewBox="0 0 7 5"><path d="M1 4 L3.5 1.5 L6 4" stroke="#888" stroke-width="0.8" fill="none"/></svg>
<svg class="a" style="left:1067px;top:360px;" width="7" height="5" viewBox="0 0 7 5"><path d="M1 1 L3.5 3.5 L6 1" stroke="#888" stroke-width="0.8" fill="none"/></svg>
<svg class="a" style="left:899px;top:100.0px;" width="7" height="5" viewBox="0 0 7 5"><path d="M1 1 L3.5 3.5 L6 1" stroke="#a8a8a8" stroke-width="0.9" fill="none"/></svg>
<div class="t" style="top:100px;font-size:6.4px;font-weight:bold;color:#eaeaea;left:909.3px;">Canvas</div>
<div class="t" style="top:117px;font-size:6.0px;color:#b8b8b8;left:930px;">W</div>
<div class="a" style="left:939px;top:114.5px;width:30px;height:12px;background:#3c3c3c;"></div>
<div class="t" style="top:118px;font-size:6.0px;color:#e8e8e8;left:941px;">2232 px</div>
<div class="t" style="top:117px;font-size:6.0px;color:#8a8a8a;left:982px;">X</div>
<div class="a" style="left:989px;top:114.5px;width:31px;height:12px;background:#4b4b4b;"></div>
<div class="t" style="top:118px;font-size:6.0px;color:#666;left:992px;">0 px</div>
<div class="t" style="top:134px;font-size:6.0px;color:#b8b8b8;left:931.5px;">H</div>
<div class="a" style="left:939px;top:131.5px;width:30px;height:12px;background:#3c3c3c;"></div>
<div class="t" style="top:135px;font-size:6.0px;color:#e8e8e8;left:941px;">2854 px</div>
<div class="t" style="top:134px;font-size:6.0px;color:#8a8a8a;left:982.5px;">Y</div>
<div class="a" style="left:989px;top:131.5px;width:31px;height:12px;background:#4b4b4b;"></div>
<div class="t" style="top:135px;font-size:6.0px;color:#666;left:992px;">0 px</div>
<svg class="a" style="left:906px;top:121px;" width="8" height="14" viewBox="0 0 8 14"><path d="M4 1 Q1 1 1 3.5 Q1 6 4 6 Q7 6 7 3.5 Q7 1 4 1Z M4 8 Q1 8 1 10.5 Q1 13 4 13 Q7 13 7 10.5 Q7 8 4 8Z M4 5 L4 9" stroke="#c4c4c4" stroke-width="1.1" fill="none"/></svg>
<div class="a" style="left:938.5px;top:151px;width:15px;height:15.5px;background:#3a3a3a;"></div>
<svg class="a" style="left:941px;top:153px;" width="10" height="12" viewBox="0 0 10 12"><rect x="0.5" y="0.5" width="9" height="11" fill="none" stroke="#ddd" stroke-width="0.9"/><circle cx="5" cy="4" r="1.6" fill="#ddd"/><path d="M2 10.5 L2 8 Q5 6 8 8 L8 10.5Z" fill="#ddd"/></svg>
<svg class="a" style="left:956px;top:154px;" width="13" height="11" viewBox="0 0 13 11"><rect x="0.5" y="0.5" width="12" height="10" fill="none" stroke="#ddd" stroke-width="0.9"/><circle cx="6.5" cy="3.8" r="1.6" fill="#ddd"/><path d="M3 9.5 L3 7.5 Q6.5 5.5 10 7.5 L10 9.5Z" fill="#ddd"/></svg>
<div class="t" style="top:177px;font-size:6.2px;color:#d8d8d8;left:938.2px;">Resolution: 250 pixels/inch</div>
<div class="t" style="top:195px;font-size:6.0px;color:#cfcfcf;left:918px;">Mode</div>
<div class="a" style="left:939px;top:192.5px;width:81px;height:12px;background:#474747;"></div>
<div class="t" style="top:196px;font-size:6.0px;color:#dcdcdc;left:943px;">RGB Color</div>
<svg class="a" style="left:1011px;top:196.5px;" width="7" height="5" viewBox="0 0 7 5"><path d="M1 1 L3.5 3.5 L6 1" stroke="#aaa" stroke-width="0.9" fill="none"/></svg>
<div class="a" style="left:939px;top:209.5px;width:81px;height:13px;background:#474747;"></div>
<div class="t" style="top:213px;font-size:6.0px;color:#dcdcdc;left:943px;">16 Bits/Channel</div>
<svg class="a" style="left:1011px;top:214.0px;" width="7" height="5" viewBox="0 0 7 5"><path d="M1 1 L3.5 3.5 L6 1" stroke="#aaa" stroke-width="0.9" fill="none"/></svg>
<div class="t" style="top:232px;font-size:6.0px;color:#b0b0b0;left:926px;">Fill</div>
<div class="a" style="left:939px;top:228.5px;width:11px;height:11px;background:#4a4a4a;box-shadow:inset 0 0 0 1px #5c5c5c;"></div>
<div class="a" style="left:953px;top:228.5px;width:67px;height:11.5px;background:#474747;"></div>
<div class="t" style="top:231px;font-size:6.0px;color:#dcdcdc;left:957px;">Transparent</div>
<svg class="a" style="left:1011px;top:232.25px;" width="7" height="5" viewBox="0 0 7 5"><path d="M1 1 L3.5 3.5 L6 1" stroke="#aaa" stroke-width="0.9" fill="none"/></svg>
<div class="a" style="left:896px;top:247px;width:169px;height:1px;background:#484848;"></div>
<svg class="a" style="left:899px;top:255.0px;" width="7" height="5" viewBox="0 0 7 5"><path d="M1 1 L3.5 3.5 L6 1" stroke="#a8a8a8" stroke-width="0.9" fill="none"/></svg>
<div class="t" style="top:255px;font-size:6.3px;font-weight:bold;color:#eaeaea;left:909.3px;">Rulers &amp; Grids</div>
<div class="a" style="left:903px;top:269.5px;width:15px;height:16px;background:#383838;"></div>
<svg class="a" style="left:906px;top:273px;" width="9" height="9" viewBox="0 0 9 9"><path d="M1 9 L1 1 L9 1" stroke="#eee" stroke-width="2.5" fill="none"/></svg>
<svg class="a" style="left:924px;top:272px;" width="12" height="12" viewBox="0 0 12 12"><path d="M0.5 0.5 H11.5 V11.5 H0.5Z M4 0.5 V11.5 M8 0.5 V11.5 M0.5 4 H11.5 M0.5 8 H11.5" stroke="#cfcfcf" stroke-width="0.8" fill="none"/></svg>
<svg class="a" style="left:945px;top:272px;" width="12" height="12" viewBox="0 0 12 12"><rect x="0.5" y="0.5" width="11" height="11" fill="none" stroke="#bbb" stroke-width="0.8"/><circle cx="6" cy="6" r="3.5" fill="none" stroke="#bbb" stroke-width="0.8" stroke-dasharray="1 1"/></svg>
<div class="a" style="left:975px;top:272px;width:45px;height:13.5px;background:#474747;"></div>
<div class="t" style="top:276px;font-size:6.0px;color:#dcdcdc;left:979px;">Pixels</div>
<svg class="a" style="left:1011px;top:276.75px;" width="7" height="5" viewBox="0 0 7 5"><path d="M1 1 L3.5 3.5 L6 1" stroke="#aaa" stroke-width="0.9" fill="none"/></svg>
<div class="a" style="left:896px;top:294px;width:169px;height:1px;background:#484848;"></div>
<svg class="a" style="left:899px;top:302.5px;" width="7" height="5" viewBox="0 0 7 5"><path d="M1 1 L3.5 3.5 L6 1" stroke="#a8a8a8" stroke-width="0.9" fill="none"/></svg>
<div class="t" style="top:303px;font-size:6.3px;font-weight:bold;color:#eaeaea;left:909.3px;">Guides</div>
<div class="a" style="left:903px;top:316.5px;width:15px;height:16px;background:#383838;"></div>
<svg class="a" style="left:905px;top:319px;" width="11" height="11" viewBox="0 0 11 11"><path d="M3 0 V11 M8 0 V11 M0 3.5 H11 M0 7.5 H11" stroke="#ddd" stroke-width="0.9"/></svg>
<svg class="a" style="left:924px;top:319px;" width="12" height="12" viewBox="0 0 12 12"><path d="M3 0 V11 M7 0 V11 M0 3.5 H9 M0 7.5 H9" stroke="#ccc" stroke-width="0.9"/><rect x="7" y="7" width="5" height="5" fill="#ddd"/></svg>
<div class="a" style="left:943px;top:316.5px;width:15px;height:16px;background:#383838;"></div>
<svg class="a" style="left:945px;top:319px;" width="12" height="12" viewBox="0 0 12 12"><path d="M2 0 V12 M0 3 H12" stroke="#ddd" stroke-width="0.9"/><path d="M5 5 L8 2 L8 8 Z" fill="#ddd"/><rect x="8" y="7" width="3" height="5" fill="#ddd"/></svg>
<div class="a" style="left:975px;top:319px;width:45px;height:13.5px;background:#474747;"></div>
<div class="a" style="left:980px;top:325.5px;width:25px;height:1.1px;background:#dcdcdc;"></div>
<svg class="a" style="left:1011px;top:323.5px;" width="7" height="5" viewBox="0 0 7 5"><path d="M1 1 L3.5 3.5 L6 1" stroke="#aaa" stroke-width="0.9" fill="none"/></svg>
<div class="a" style="left:896px;top:340.5px;width:169px;height:1px;background:#484848;"></div>
<svg class="a" style="left:899px;top:349.5px;" width="7" height="5" viewBox="0 0 7 5"><path d="M1 1 L3.5 3.5 L6 1" stroke="#a8a8a8" stroke-width="0.9" fill="none"/></svg>
<div class="t" style="top:350px;font-size:6.3px;font-weight:bold;color:#eaeaea;left:909.3px;">Quick Actions</div>
<div class="a" style="left:896px;top:385px;width:180px;height:2.5px;background:#3e3e3e;"></div>
<div class="a" style="left:896px;top:387.5px;width:180px;height:333px;background:#535353;"></div>
<div class="a" style="left:925.5px;top:387.5px;width:150.5px;height:19px;background:#474747;"></div>
<div class="t" style="top:394px;font-size:6.1px;font-weight:bold;color:#f2f2f2;left:901px;">Layers</div>
<svg class="a" style="left:1064px;top:393px;" width="9" height="8" viewBox="0 0 9 8"><path d="M0.5 1 L8.5 1 M0.5 4 L8.5 4 M0.5 7 L8.5 7" stroke="#c8c8c8" stroke-width="1.2"/></svg>
<div class="a" style="left:899.5px;top:413.3px;width:52.5px;height:12.5px;background:#404040;"></div>
<svg class="a" style="left:902px;top:416px;" width="7" height="7" viewBox="0 0 7 7"><circle cx="3" cy="3" r="2.2" fill="none" stroke="#ddd" stroke-width="1"/><path d="M4.5 4.5 L6.5 6.5" stroke="#ddd" stroke-width="1.2"/></svg>
<div class="t" style="top:417px;font-size:6.0px;color:#d6d6d6;left:910px;">Kind</div>
<svg class="a" style="left:943px;top:417.5px;" width="7" height="5" viewBox="0 0 7 5"><path d="M1 1 L3.5 3.5 L6 1" stroke="#aaa" stroke-width="0.9" fill="none"/></svg>
<svg class="a" style="left:958px;top:414px;" width="11" height="11" viewBox="0 0 11 11"><rect x="0.5" y="1.5" width="10" height="8" fill="none" stroke="#d8d8d8" stroke-width="1"/><path d="M2 8 L4.5 5 L6.5 7 L8 6 L9 8Z" fill="#d8d8d8"/></svg>
<svg class="a" style="left:973px;top:414px;" width="11" height="11" viewBox="0 0 11 11"><circle cx="5.5" cy="5.5" r="4.3" fill="none" stroke="#d8d8d8" stroke-width="1"/><path d="M5.5 1.2 A4.3 4.3 0 0 1 5.5 9.8Z" fill="#d8d8d8" transform="rotate(45 5.5 5.5)"/></svg>
<div class="t" style="top:416px;font-size:8.5px;color:#d8d8d8;font-family:'Liberation Serif';left:593.50px;width:800px;text-align:center;">T</div>
<svg class="a" style="left:1003px;top:414px;" width="11" height="11" viewBox="0 0 11 11"><path d="M2.5 0 V11 M8.5 0 V11 M0 2.5 H11 M0 8.5 H11" stroke="#d8d8d8" stroke-width="1"/></svg>
<svg class="a" style="left:1018px;top:414px;" width="11" height="11" viewBox="0 0 11 11"><path d="M2 1 L7 1 L9.5 3.5 L9.5 10 L2 10Z" fill="none" stroke="#d8d8d8" stroke-width="1"/><rect x="3.5" y="5" width="4.5" height="4" fill="#d8d8d8"/></svg>
<svg class="a" style="left:1034px;top:411px;" width="8" height="12" viewBox="0 0 8 12"><circle cx="4" cy="3.5" r="3" fill="#f0f0f0"/><path d="M4 6.5 L4 11" stroke="#bbb" stroke-width="1"/></svg>
<div class="a" style="left:896px;top:429.5px;width:180px;height:1px;background:#4a4a4a;"></div>
<div class="a" style="left:899.5px;top:432.5px;width:78px;height:11px;background:#4d4d4d;"></div>
<div class="t" style="top:435px;font-size:6.0px;color:#7a7a7a;left:903px;">Normal</div>
<div class="t" style="top:435px;font-size:6.0px;color:#7a7a7a;left:983px;">Opacity:</div>
<div class="a" style="left:1009px;top:432.5px;width:21px;height:11px;background:#4a4a4a;"></div>
<div class="t" style="top:436px;font-size:5.6px;color:#6d6d6d;left:1011px;">100%</div>
<div class="a" style="left:1030px;top:432.5px;width:10px;height:11px;background:#4d4d4d;"></div>
<div class="a" style="left:896px;top:449px;width:180px;height:1px;background:#484848;"></div>
<div class="t" style="top:455px;font-size:6.0px;color:#7a7a7a;left:901px;">Lock:</div>
<svg class="a" style="left:919px;top:453px;" width="11" height="11" viewBox="0 0 11 11"><rect x="1" y="1" width="9" height="9" fill="none" stroke="#8a8a8a" stroke-width="0.8" stroke-dasharray="1.5 1"/><rect x="3" y="3" width="2.5" height="2.5" fill="#8a8a8a"/><rect x="5.5" y="5.5" width="2.5" height="2.5" fill="#8a8a8a"/></svg>
<svg class="a" style="left:932px;top:453px;" width="11" height="11" viewBox="0 0 11 11"><path d="M9.5 1 L4 7" stroke="#8a8a8a" stroke-width="1.2"/><path d="M4 6.5 Q1.5 7 1.5 10 Q4 10 5 8Z" fill="#8a8a8a"/></svg>
<svg class="a" style="left:946px;top:453px;" width="11" height="11" viewBox="0 0 11 11"><path d="M5.5 0.5 V10.5 M0.5 5.5 H10.5" stroke="#8a8a8a" stroke-width="1"/></svg>
<svg class="a" style="left:960px;top:453px;" width="11" height="11" viewBox="0 0 11 11"><rect x="1" y="3" width="8" height="7" fill="none" stroke="#8a8a8a" stroke-width="1"/><path d="M3 1 L10 1 L10 8" stroke="#8a8a8a" stroke-width="1" fill="none"/></svg>
<svg class="a" style="left:974px;top:453px;" width="11" height="11" viewBox="0 0 11 11"><rect x="1.5" y="5" width="8" height="5.5" fill="#8a8a8a"/><path d="M3 5 V3.5 Q5.5 0 8 3.5 V5" stroke="#8a8a8a" stroke-width="1" fill="none"/></svg>
<div class="t" style="top:455px;font-size:6.0px;color:#7a7a7a;left:996px;">Fill:</div>
<div class="a" style="left:1009px;top:452.5px;width:21px;height:11px;background:#4a4a4a;"></div>
<div class="t" style="top:456px;font-size:5.6px;color:#6d6d6d;left:1011px;">100%</div>
<div class="a" style="left:1030px;top:452.5px;width:10px;height:11px;background:#4d4d4d;"></div>
<div class="a" style="left:896px;top:468px;width:180px;height:1px;background:#484848;"></div>
<div class="a" style="left:1066px;top:470px;width:9px;height:235px;background:#4a4a4a;"></div>
<div class="a" style="left:1067px;top:489px;width:7px;height:66px;background:#636363;"></div>
<svg class="a" style="left:1067px;top:472px;" width="7" height="5" viewBox="0 0 7 5"><path d="M1 4 L3.5 1.5 L6 4" stroke="#888" stroke-width="0.8" fill="none"/></svg>
<div class="a" style="left:896px;top:489px;width:170px;height:1px;background:#484848;"></div>
<div class="a" style="left:896px;top:514px;width:170px;height:1px;background:#484848;"></div>
<div class="a" style="left:896px;top:544px;width:170px;height:1px;background:#484848;"></div>
<div class="a" style="left:896px;top:571.5px;width:170px;height:1px;background:#484848;"></div>
<div class="a" style="left:896px;top:600px;width:170px;height:1px;background:#484848;"></div>
<div class="a" style="left:896px;top:628.5px;width:170px;height:1px;background:#484848;"></div>
<div class="a" style="left:896px;top:657.5px;width:170px;height:1px;background:#484848;"></div>
<div class="a" style="left:896px;top:686px;width:170px;height:1px;background:#484848;"></div>
<div class="a" style="left:915px;top:469px;width:1px;height:243px;background:#4b4b4b;"></div>
<svg class="a" style="left:900.5px;top:475px;" width="11" height="6" viewBox="0 0 11 6"><path d="M0.5 3 Q5.5 -1.5 10.5 3 Q5.5 7.5 0.5 3Z" fill="none" stroke="#9c9c9c" stroke-width="0.9"/><circle cx="5.5" cy="3" r="1.3" fill="#9c9c9c"/></svg>
<svg class="a" style="left:926px;top:476px;" width="7" height="5" viewBox="0 0 7 5"><path d="M1 1 L3.5 3.5 L6 1" stroke="#aaa" stroke-width="0.9" fill="none"/></svg>
<svg class="a" style="left:935px;top:473px;" width="10" height="9" viewBox="0 0 10 9"><path d="M0.5 1 L4 1 L5 2.5 L9.5 2.5 L9.5 8.5 L0.5 8.5Z" fill="#e8e8e8"/><rect x="1" y="3.5" width="8" height="0.8" fill="#666"/></svg>
<div class="t" style="top:475px;font-size:6.0px;color:#e0e0e0;left:951.5px;">edite text</div>
<svg class="a" style="left:900.5px;top:498px;" width="11" height="6" viewBox="0 0 11 6"><path d="M0.5 3 Q5.5 -1.5 10.5 3 Q5.5 7.5 0.5 3Z" fill="none" stroke="#9c9c9c" stroke-width="0.9"/><circle cx="5.5" cy="3" r="1.3" fill="#9c9c9c"/></svg>
<div class="t" style="top:495px;font-size:13.5px;color:#eeeeee;font-family:'Liberation Serif';left:547.50px;width:800px;text-align:center;">T</div>
<div class="t" style="top:498px;font-size:6.0px;color:#e0e0e0;left:962px;">Layer 2</div>
<svg class="a" style="left:900.5px;top:527px;" width="11" height="6" viewBox="0 0 11 6"><path d="M0.5 3 Q5.5 -1.5 10.5 3 Q5.5 7.5 0.5 3Z" fill="none" stroke="#9c9c9c" stroke-width="0.9"/><circle cx="5.5" cy="3" r="1.3" fill="#9c9c9c"/></svg>
<div class="a" style="left:938.5px;top:520px;width:15px;height:19px;background:#fff;background-color:#fff;background-image:linear-gradient(45deg,#ccc 25%,transparent 25%,transparent 75%,#ccc 75%),linear-gradient(45deg,#ccc 25%,transparent 25%,transparent 75%,#ccc 75%);background-size:4px 4px;background-position:2px 0,0 2px;box-shadow:0 0 0 0.5px #777;"></div>
<div class="a" style="left:939.5px;top:521px;width:3px;height:3px;background:#7a4a4a;"></div>
<div class="t" style="top:527px;font-size:6.0px;color:#e0e0e0;left:958px;">Layer 3</div>
<svg class="a" style="left:900.5px;top:555.8px;" width="11" height="6" viewBox="0 0 11 6"><path d="M0.5 3 Q5.5 -1.5 10.5 3 Q5.5 7.5 0.5 3Z" fill="none" stroke="#9c9c9c" stroke-width="0.9"/><circle cx="5.5" cy="3" r="1.3" fill="#9c9c9c"/></svg>
<div class="t" style="top:552px;font-size:13.5px;color:#eeeeee;font-family:'Liberation Serif';left:547.50px;width:800px;text-align:center;">T</div>
<div class="t" style="top:556px;font-size:6.0px;color:#e0e0e0;left:962px;">c8a00000000...&lt;&lt;&lt;&lt;&lt;&lt;&lt;&lt;0 d</div>
<div class="a" style="left:901.5px;top:582.5px;width:8px;height:9px;background:#505050;box-shadow:inset 0 0 0 1px #5a5a5a;"></div>
<div class="t" style="top:581px;font-size:13.5px;color:#eeeeee;font-family:'Liberation Serif';left:547.50px;width:800px;text-align:center;">T</div>
<div class="t" style="top:584px;font-size:6.0px;color:#e0e0e0;left:962px;">1ee</div>
<svg class="a" style="left:900.5px;top:612.5px;" width="11" height="6" viewBox="0 0 11 6"><path d="M0.5 3 Q5.5 -1.5 10.5 3 Q5.5 7.5 0.5 3Z" fill="none" stroke="#9c9c9c" stroke-width="0.9"/><circle cx="5.5" cy="3" r="1.3" fill="#9c9c9c"/></svg>
<div class="t" style="top:609px;font-size:13.5px;color:#eeeeee;font-family:'Liberation Serif';left:547.50px;width:800px;text-align:center;">T</div>
<div class="t" style="top:613px;font-size:6.0px;color:#e0e0e0;left:962px;">169</div>
<svg class="a" style="left:900.5px;top:641.5px;" width="11" height="6" viewBox="0 0 11 6"><path d="M0.5 3 Q5.5 -1.5 10.5 3 Q5.5 7.5 0.5 3Z" fill="none" stroke="#9c9c9c" stroke-width="0.9"/><circle cx="5.5" cy="3" r="1.3" fill="#9c9c9c"/></svg>
<div class="t" style="top:638px;font-size:13.5px;color:#eeeeee;font-family:'Liberation Serif';left:547.50px;width:800px;text-align:center;">T</div>
<div class="t" style="top:642px;font-size:6.0px;color:#e0e0e0;left:962px;">m</div>
<svg class="a" style="left:900.5px;top:669.5px;" width="11" height="6" viewBox="0 0 11 6"><path d="M0.5 3 Q5.5 -1.5 10.5 3 Q5.5 7.5 0.5 3Z" fill="none" stroke="#9c9c9c" stroke-width="0.9"/><circle cx="5.5" cy="3" r="1.3" fill="#9c9c9c"/></svg>
<div class="t" style="top:666px;font-size:13.5px;color:#eeeeee;font-family:'Liberation Serif';left:547.50px;width:800px;text-align:center;">T</div>
<div class="t" style="top:670px;font-size:6.0px;color:#e0e0e0;left:962px;">129 1 a</div>
<svg class="a" style="left:900.5px;top:697.5px;" width="11" height="6" viewBox="0 0 11 6"><path d="M0.5 3 Q5.5 -1.5 10.5 3 Q5.5 7.5 0.5 3Z" fill="none" stroke="#9c9c9c" stroke-width="0.9"/><circle cx="5.5" cy="3" r="1.3" fill="#9c9c9c"/></svg>
<div class="t" style="top:694px;font-size:13.5px;color:#eeeeee;font-family:'Liberation Serif';left:547.50px;width:800px;text-align:center;">T</div>
<div class="t" style="top:698px;font-size:6.0px;color:#e0e0e0;left:962px;">01.01.1990</div>
<div class="a" style="left:896px;top:705px;width:180px;height:15px;background:#535353;"></div>
<svg class="a" style="left:949px;top:711px;" width="10" height="6" viewBox="0 0 10 6"><path d="M1 3 Q1 1 3 1 L5 1 M5 5 L7 5 Q9 5 9 3" stroke="#777" stroke-width="1" fill="none"/><circle cx="3" cy="3" r="2" fill="none" stroke="#777" stroke-width="0.8"/><circle cx="7" cy="3" r="2" fill="none" stroke="#777" stroke-width="0.8"/></svg>
<div class="t" style="top:712px;font-size:6.5px;color:#888;left:569.50px;width:800px;text-align:center;font-style:italic;">fx</div>
<svg class="a" style="left:981px;top:710.5px;" width="10" height="7" viewBox="0 0 10 7"><rect x="0.5" y="0.5" width="9" height="6.5" fill="none" stroke="#b0b0b0" stroke-width="1"/><circle cx="5" cy="3.7" r="2" fill="#b0b0b0"/></svg>
<svg class="a" style="left:998px;top:710px;" width="9" height="8" viewBox="0 0 9 8"><circle cx="4.5" cy="4" r="3.5" fill="none" stroke="#b0b0b0" stroke-width="1"/><path d="M4.5 0.5 A3.5 3.5 0 0 1 4.5 7.5Z" fill="#b0b0b0" transform="rotate(45 4.5 4)"/></svg>
<svg class="a" style="left:1015px;top:710.5px;" width="10" height="7" viewBox="0 0 10 7"><path d="M0.5 0.5 L4 0.5 L5 1.5 L9.5 1.5 L9.5 7 L0.5 7Z" fill="#b0b0b0"/></svg>
<svg class="a" style="left:1032px;top:710px;" width="9" height="8" viewBox="0 0 9 8"><rect x="0.5" y="0.5" width="8" height="7.5" fill="none" stroke="#b0b0b0" stroke-width="1"/><path d="M4.5 2 V6.5 M2.2 4.2 H6.8" stroke="#b0b0b0" stroke-width="1"/></svg>
<svg class="a" style="left:1050px;top:710px;" width="8" height="8" viewBox="0 0 8 8"><path d="M1 1.5 H7 M2 2 L2.5 8 L5.5 8 L6 2 M3 0.5 H5" stroke="#777" stroke-width="1" fill="none"/></svg>
<div id="canvas" class="a"></div>
<div class="a" style="left:303px;top:187px;width:290px;height:411px;background:repeating-conic-gradient(#cbcbcb 0 25%,#fff 0 50%) 0 0/10px 11.08px;"></div>
<div class="a" style="left:36px;top:210px;width:823px;height:1px;background:rgba(120,222,218,0.52);box-shadow:0 1px 0 rgba(120,222,218,0.24),0 -1px 0 rgba(120,222,218,0.24);"></div>
<div class="a" style="left:36px;top:575px;width:823px;height:1px;background:rgba(120,222,218,0.52);box-shadow:0 1px 0 rgba(120,222,218,0.24),0 -1px 0 rgba(120,222,218,0.24);"></div>
<div class="a" style="left:323px;top:72px;width:1px;height:639px;background:rgba(120,222,218,0.52);box-shadow:1px 0 0 rgba(120,222,218,0.24),-1px 0 0 rgba(120,222,218,0.24);"></div>
<div class="a" style="left:573px;top:72px;width:1px;height:639px;background:rgba(120,222,218,0.52);box-shadow:1px 0 0 rgba(120,222,218,0.24),-1px 0 0 rgba(120,222,218,0.24);"></div>
<div class="a" style="left:394px;top:154px;width:292px;height:412px;background:#fff;box-shadow:inset 1px 1px 0 #e4e4e4;"></div>
<svg class="a" style="left:407px;top:185px" width="19" height="19" viewBox="0 0 19 19">
<rect x="0" y="0" width="19" height="19" fill="#000"/>
<path d="M1 5.5 Q5 10.5 9.5 11 Q14 10.5 18 5.5 L18 11.3 L1 11.3Z" fill="#238a48"/>
<rect x="1" y="12.8" width="17" height="5.2" fill="#238a48"/>
<rect x="8.7" y="10.5" width="1.6" height="8" fill="#000"/>
<rect x="1" y="1" width="17" height="1" fill="#fff"/>
<rect x="8.7" y="1" width="1.6" height="9" fill="#fff"/>
</svg>
<div class="t" style="top:185px;font-size:10px;font-weight:bold;color:#1e3a6c;letter-spacing:0.5px;left:427.5px;">BANK OF AFRICA</div>
<div class="t" style="top:198px;font-size:5.3px;font-weight:bold;color:#24406c;letter-spacing:0.7px;left:462px;">BMCE GROUP</div>
<svg class="a" style="left:511px;top:194px" width="10" height="10" viewBox="0 0 10 10"><circle cx="5" cy="5" r="4.2" fill="#fff" stroke="#1e3a6c" stroke-width="1.3"/><path d="M3.5 3 Q5 2.5 6.5 3.5 L6 6 L5 7.5 L4.2 5.5Z" fill="#2e8a5a"/></svg>
<div class="t" style="top:170px;font-size:6.9px;font-weight:bold;color:#1a1a1a;right:403.00px;">Mortgage Statement</div>
<div class="t" style="top:178px;font-size:4.42px;color:#1a1a1a;right:403.00px;">Statement Date: 05/04/2025</div>
<div class="a" style="left:552px;top:184px;width:125px;height:84px;border:1px solid #8a8a8a;border-top-color:#555;"></div>
<div class="t" style="top:186px;font-size:4.45px;color:#1a1a1a;left:554px;">Loan Number:</div>
<div class="t" style="top:186px;font-size:4.45px;color:#1a1a1a;right:406.30px;">250000</div>
<div class="t" style="top:192px;font-size:4.45px;color:#1a1a1a;left:554px;">Member Number:</div>
<div class="t" style="top:192px;font-size:4.45px;color:#1a1a1a;right:406.30px;">31234567891</div>
<div class="t" style="top:197px;font-size:4.45px;color:#1a1a1a;left:554px;">Payment Due Date:</div>
<div class="t" style="top:197px;font-size:4.45px;color:#1a1a1a;right:406.30px;">30/04/2025</div>
<div class="t" style="top:202px;font-size:4.45px;font-weight:bold;color:#1a1a1a;left:554px;">Amount Due:</div>
<div class="t" style="top:202px;font-size:4.45px;font-weight:bold;color:#1a1a1a;right:406.30px;">744.53 XOF</div>
<div class="t" style="top:208px;font-size:2.9px;color:#1a1a1a;left:558px;">If payment is received after 30/04/2025, 28.57 XOF late fees will be charged.</div>
<div class="a" style="left:552px;top:211px;width:125px;height:10.7px;background:#113d86;"></div>
<div class="t" style="top:214px;font-size:4.48px;font-weight:bold;color:#fff;left:553.9px;">Explanation of Amount Due</div>
<div class="t" style="top:224px;font-size:4.45px;color:#1a1a1a;left:554px;">Principal:</div>
<div class="t" style="top:224px;font-size:4.45px;color:#1a1a1a;right:406.30px;">204.38 XOF</div>
<div class="t" style="top:229px;font-size:4.45px;color:#1a1a1a;left:554px;">Interest:</div>
<div class="t" style="top:229px;font-size:4.45px;color:#1a1a1a;right:406.30px;">367.02 XOF</div>
<div class="t" style="top:234px;font-size:4.45px;color:#1a1a1a;left:554px;">Escrow (Taxes and Insurance):</div>
<div class="t" style="top:234px;font-size:4.45px;color:#1a1a1a;right:406.30px;">173.13 XOF</div>
<div class="t" style="top:240px;font-size:4.45px;font-weight:bold;color:#1a1a1a;left:554px;">Regular Monthly Payment:</div>
<div class="t" style="top:240px;font-size:4.45px;font-weight:bold;color:#1a1a1a;right:406.30px;">744.53 XOF</div>
<div class="t" style="top:245px;font-size:4.45px;color:#1a1a1a;left:554px;">Total Fees and Charges:</div>
<div class="t" style="top:245px;font-size:4.45px;color:#1a1a1a;right:406.30px;">0.00 XOF</div>
<div class="t" style="top:251px;font-size:4.45px;color:#1a1a1a;left:554px;">Overdue Payment:</div>
<div class="t" style="top:251px;font-size:4.45px;color:#1a1a1a;right:406.30px;">0.00 XOF</div>
<div class="t" style="top:256px;font-size:4.45px;font-weight:bold;color:#1a1a1a;left:554px;">Total Amount Due:</div>
<div class="t" style="top:256px;font-size:4.45px;font-weight:bold;color:#1a1a1a;right:406.30px;">744.53 XOF</div>
<div class="a" style="left:614.5px;top:237.2px;width:59.5px;height:0.7px;background:#666;"></div>
<div class="t" style="top:230px;font-size:4.9px;font-weight:bold;color:#1a1a1a;left:406px;">John Citizen</div>
<div class="t" style="top:235px;font-size:4.9px;font-weight:bold;color:#1a1a1a;left:406px;">Quartier Hippodrome, Rue 123 Porte 456,</div>
<div class="t" style="top:241px;font-size:4.9px;font-weight:bold;color:#1a1a1a;left:406px;">Commune III, Bamako, Mali</div>
<div class="a" style="left:406px;top:268.4px;width:271px;height:8.4px;background:#113d86;"></div>
<div class="t" style="top:272px;font-size:4.42px;font-weight:bold;color:#fff;left:408px;">Account Information</div>
<div class="a" style="left:406px;top:276.8px;width:271px;height:22px;border:1px solid #8a8a8a;border-top:none;"></div>
<div class="a" style="left:573.3px;top:276.8px;width:0.8px;height:21.8px;background:#8a8a8a;"></div>
<div class="t" style="top:283px;font-size:4.45px;color:#1a1a1a;left:408px;">Outstanding Principal:</div>
<div class="t" style="top:283px;font-size:4.45px;color:#1a1a1a;right:508.20px;">125,835.64 XOF</div>
<div class="t" style="top:288px;font-size:4.45px;color:#1a1a1a;left:408px;">Interest Rate:</div>
<div class="t" style="top:288px;font-size:4.45px;color:#1a1a1a;right:508.20px;">3.500%</div>
<div class="t" style="top:293px;font-size:4.45px;color:#1a1a1a;left:408px;">Prepayment Penalty:</div>
<div class="t" style="top:293px;font-size:4.45px;color:#1a1a1a;right:508.20px;">No</div>
<div class="t" style="top:283px;font-size:4.45px;color:#1a1a1a;left:576px;">Property Address:</div>
<div class="t" style="top:283px;font-size:4.45px;color:#1a1a1a;left:615px;">Quartier Hippodrome, Rue</div>
<div class="t" style="top:288px;font-size:4.45px;color:#1a1a1a;left:615px;">123 Porte 456, Commune III,</div>
<div class="t" style="top:293px;font-size:4.45px;color:#1a1a1a;left:615px;">Bamako, Mali</div>
<div class="a" style="left:406px;top:305.3px;width:271px;height:6.8px;background:#113d86;"></div>
<div class="t" style="top:308px;font-size:4.42px;font-weight:bold;color:#fff;left:408px;">Transaction Activity (05/04 to 30/04)</div>
<div class="a" style="left:406px;top:312px;width:271px;height:15.3px;border:1px solid #8a8a8a;border-top:none;"></div>
<div class="a" style="left:407px;top:318.6px;width:269px;height:8px;background:#f3dcdc;"></div>
<div class="a" style="left:406px;top:318px;width:271px;height:1px;background:#111;"></div>
<div class="a" style="left:435.6px;top:312px;width:0.8px;height:15.3px;background:#666;"></div>
<div class="a" style="left:607.6px;top:312px;width:0.8px;height:15.3px;background:#666;"></div>
<div class="a" style="left:642.7px;top:312px;width:0.8px;height:15.3px;background:#666;"></div>
<div class="t" style="top:315px;font-size:3.8px;font-weight:bold;color:#1a1a1a;left:410px;">Date</div>
<div class="t" style="top:315px;font-size:3.8px;font-weight:bold;color:#1a1a1a;left:121.50px;width:800px;text-align:center;">Description</div>
<div class="t" style="top:315px;font-size:3.85px;font-weight:bold;color:#1a1a1a;left:225.00px;width:800px;text-align:center;">Charges</div>
<div class="t" style="top:315px;font-size:3.85px;font-weight:bold;color:#1a1a1a;left:260.00px;width:800px;text-align:center;">Payments</div>
<div class="t" style="top:322px;font-size:4.3px;color:#1a1a1a;left:410px;">05/04</div>
<div class="t" style="top:322px;font-size:4.36px;color:#1a1a1a;left:438px;">Payment Received Due Date 30/04/25</div>
<div class="t" style="top:322px;font-size:4.26px;color:#1a1a1a;right:407.60px;">744.53 XOF</div>
<div class="a" style="left:406px;top:329.4px;width:142px;height:6.7px;background:#113d86;"></div>
<div class="t" style="top:332px;font-size:4.46px;font-weight:bold;color:#fff;left:408px;">Past Payments Breakdown</div>
<div class="a" style="left:406px;top:336px;width:142px;height:38.8px;border:1px solid #8a8a8a;border-top:none;"></div>
<div class="a" style="left:407px;top:336px;width:140px;height:5.3px;background:#f3dcdc;"></div>
<div class="a" style="left:407px;top:341.2px;width:140px;height:0.7px;background:#999;"></div>
<div class="t" style="top:339px;font-size:3.6px;font-weight:bold;color:#1a1a1a;right:573.00px;">Paid Last Month</div>
<div class="t" style="top:339px;font-size:3.75px;font-weight:bold;color:#1a1a1a;right:536.30px;">Paid Year To Date</div>
<div class="t" style="top:343px;font-size:4.45px;color:#1a1a1a;left:408px;">Principal:</div>
<div class="t" style="top:343px;font-size:4.45px;color:#1a1a1a;right:573.00px;">203.79 XOF</div>
<div class="t" style="top:343px;font-size:4.45px;color:#1a1a1a;right:536.00px;">203.79 XOF</div>
<div class="t" style="top:348px;font-size:4.45px;color:#1a1a1a;left:408px;">Interest:</div>
<div class="t" style="top:348px;font-size:4.45px;color:#1a1a1a;right:573.00px;">367.62 XOF</div>
<div class="t" style="top:348px;font-size:4.45px;color:#1a1a1a;right:536.00px;">367.62 XOF</div>
<div class="t" style="top:353px;font-size:4.45px;color:#1a1a1a;left:408px;">Escrow (Taxes and Insurance):</div>
<div class="t" style="top:353px;font-size:4.45px;color:#1a1a1a;right:573.00px;">173.12 XOF</div>
<div class="t" style="top:353px;font-size:4.45px;color:#1a1a1a;right:536.00px;">173.12 XOF</div>
<div class="t" style="top:359px;font-size:4.45px;color:#1a1a1a;left:408px;">Fees:</div>
<div class="t" style="top:359px;font-size:4.45px;color:#1a1a1a;right:573.00px;">0.00 XOF</div>
<div class="t" style="top:359px;font-size:4.45px;color:#1a1a1a;right:536.00px;">0.00 XOF</div>
<div class="t" style="top:364px;font-size:4.45px;color:#1a1a1a;left:408px;">Partial Payment (Unapplied):</div>
<div class="t" style="top:364px;font-size:4.45px;color:#1a1a1a;right:573.00px;">0.00 XOF</div>
<div class="t" style="top:364px;font-size:4.45px;color:#1a1a1a;right:536.00px;">0.00 XOF</div>
<div class="t" style="top:369px;font-size:4.45px;font-weight:bold;color:#1a1a1a;left:408px;">Total:</div>
<div class="t" style="top:369px;font-size:4.45px;font-weight:bold;color:#1a1a1a;right:573.00px;">744.53 XOF</div>
<div class="t" style="top:369px;font-size:4.45px;font-weight:bold;color:#1a1a1a;right:536.00px;">744.53 XOF</div>
<div class="a" style="left:406px;top:375.7px;width:142px;height:7.8px;background:#113d86;"></div>
<div class="t" style="top:379px;font-size:4.46px;font-weight:bold;color:#fff;left:408px;">Additional Information</div>
<div class="a" style="left:406px;top:383.5px;width:142px;height:33.4px;border:1px solid #8a8a8a;border-top:none;"></div>
<div class="t" style="top:386px;font-size:4.44px;color:#1a1a1a;left:408px;">FOR INFORMATION ON HOUSING COUNSELING AGENCIES OR</div>
<div class="t" style="top:390px;font-size:4.44px;color:#1a1a1a;left:408px;">PROGRAMS IN YOUR AREA CONTACT:</div>
<div class="t" style="top:396px;font-size:4.44px;color:#1a1a1a;left:408px;">+223 20 29 78 78</div>
<div class="t" style="top:402px;font-size:4.44px;color:#2233cc;left:408px;text-decoration:underline;text-decoration-color:rgba(34,51,204,0.45);">www.boamali.com</div>
<div class="t" style="top:408px;font-size:4.44px;color:#1a1a1a;left:408px;">Contact the Bank of Africa Mali at: +223 20 29 78 78</div>
<div class="t" style="top:413px;font-size:4.44px;color:#2233cc;left:408px;text-decoration:underline;text-decoration-color:rgba(34,51,204,0.45);">contact@boamali.com</div>
<div class="t" style="top:433px;font-size:4.48px;color:#1a1a1a;left:406px;">For prompt credit, return this coupon with your check in the enclosed envelope to the location shown below.</div>
<div class="t" style="top:438px;font-size:4.42px;font-weight:bold;color:#1a1a1a;left:406px;">If you are set up with auto payment transfer from your share account, you do not need to mail your payment.</div>
<div class="a" style="left:406px;top:444.9px;width:271px;height:6.4px;background:#113d86;"></div>
<div class="a" style="left:406px;top:451.2px;width:271px;height:28.4px;border:1px solid #8a8a8a;border-top:none;"></div>
<div class="a" style="left:407px;top:451.2px;width:269px;height:7px;background:#f3dcdc;"></div>
<div class="a" style="left:479px;top:444.9px;width:0.8px;height:13.3px;background:#667;"></div>
<div class="a" style="left:545.3px;top:444.9px;width:0.8px;height:34.6px;background:#777;"></div>
<div class="t" style="top:447px;font-size:4.67px;color:#fff;left:43.00px;width:800px;text-align:center;">Member Number</div>
<div class="t" style="top:447px;font-size:4.7px;color:#fff;left:112.00px;width:800px;text-align:center;">Loan Number</div>
<div class="t" style="top:447px;font-size:4.77px;color:#fff;left:211.00px;width:800px;text-align:center;">Amount Due</div>
<div class="t" style="top:453px;font-size:5.2px;color:#1a1a1a;left:43.00px;width:800px;text-align:center;">31234567891</div>
<div class="t" style="top:453px;font-size:5.2px;color:#1a1a1a;left:112.00px;width:800px;text-align:center;">250000</div>
<div class="t" style="top:453px;font-size:5.2px;font-weight:bold;color:#1a1a1a;left:547.3px;">Due   By: 30/04/2025</div>
<div class="t" style="top:453px;font-size:5.3px;font-weight:bold;color:#1a1a1a;right:418.40px;">744.53 XOF</div>
<div class="a" style="left:406.5px;top:458px;width:139px;height:0.8px;background:#999;"></div>
<div class="a" style="left:545.5px;top:458px;width:131px;height:0.8px;background:#777;"></div>
<div class="a" style="left:545.5px;top:465px;width:131px;height:0.7px;background:#888;"></div>
<div class="a" style="left:545.5px;top:471.8px;width:131px;height:0.7px;background:#888;"></div>
<div class="a" style="left:546px;top:472.3px;width:130px;height:6.5px;background:#f3dcdc;"></div>
<div class="t" style="top:461px;font-size:4.44px;color:#1a1a1a;left:547.3px;">Additional Principal:</div>
<div class="t" style="top:467px;font-size:4.44px;color:#1a1a1a;left:547.3px;">Additional Escrow:</div>
<div class="t" style="top:474px;font-size:4.43px;font-weight:bold;color:#1a1a1a;left:547.3px;">Total Amount Enclosed:</div>
<div class="t" style="top:461px;font-size:4.42px;font-weight:bold;color:#1a1a1a;left:611.5px;">XOF</div>
<div class="t" style="top:467px;font-size:4.42px;font-weight:bold;color:#1a1a1a;left:611.5px;">XOF</div>
<div class="t" style="top:474px;font-size:4.42px;font-weight:bold;color:#1a1a1a;left:611.5px;">XOF</div>
<div class="t" style="top:464px;font-size:5.42px;font-weight:bold;color:#1a1a1a;left:76.00px;width:800px;text-align:center;">If payment is received after 05/04/2025,</div>
<div class="t" style="top:470px;font-size:5.42px;font-weight:bold;color:#1a1a1a;left:76.00px;width:800px;text-align:center;">28.57 XOF late fees will be charged.</div>
<div class="t" style="top:497px;font-size:4.9px;font-weight:bold;color:#1a1a1a;left:406px;">John Citizen</div>
<div class="t" style="top:503px;font-size:4.9px;font-weight:bold;color:#1a1a1a;left:406px;">Quartier Hippodrome, Rue 123 Porte 456,</div>
<div class="t" style="top:508px;font-size:4.9px;font-weight:bold;color:#1a1a1a;left:406px;">Commune III, Bamako, Mali</div>
<div class="t" style="top:519px;font-size:4.5px;font-weight:bold;color:#1a1a1a;right:409.00px;">Bank of Africa Mali</div>
<div class="t" style="top:525px;font-size:4.86px;color:#333;right:409.00px;">Avenue Moussa Travélé, Rue 243, Porte 297</div>
<div class="t" style="top:530px;font-size:4.86px;color:#333;right:409.00px;">Badalabougou, Bamako, Mali</div>
<div class="t" style="top:538px;font-size:3.6px;color:#3a3a3a;letter-spacing:0.25px;right:409.00px;">!||0ll0!|!0||00|l!0|||0!l00||!0l||0l|l0|!||0!</div>

</body></html>
